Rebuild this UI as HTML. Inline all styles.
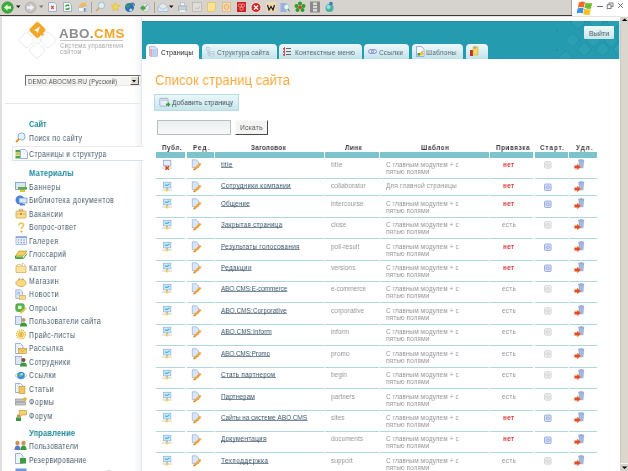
<!DOCTYPE html>
<html><head><meta charset="utf-8"><style>
html,body{margin:0;padding:0;}
body{width:628px;height:471px;overflow:hidden;position:relative;background:#fff;font-family:"Liberation Sans", sans-serif;}
</style></head><body>
<div style="position:absolute;left:0px;top:0px;width:572px;height:15px;background:#d6d3ce"></div><div style="position:absolute;left:0px;top:15px;width:573px;height:1px;background:#3c3a36"></div><div style="position:absolute;left:571px;top:0px;width:1px;height:15px;background:#a8a49c"></div><svg style="position:absolute;left:1px;top:1px" width="13" height="13" viewBox="0 0 13 13"><circle cx="6.5" cy="6.5" r="5.6" fill="#3cae3a" stroke="#2a8a28" stroke-width="0.8"/><path d="M3 6.5 L6.5 3.2 L6.5 5.2 L10 5.2 L10 7.8 L6.5 7.8 L6.5 9.8Z" fill="#e8ffe0"/></svg><svg style="position:absolute;left:16px;top:5px" width="5" height="4" viewBox="0 0 5 4"><path d="M0 0.5 L4.5 0.5 L2.25 3Z" fill="#111"/></svg><svg style="position:absolute;left:24px;top:1px" width="13" height="13" viewBox="0 0 13 13"><circle cx="6.5" cy="6.5" r="5.4" fill="#c4c4c2" stroke="#a8a8a6" stroke-width="0.8"/><path d="M10 6.5 L6.5 3.2 L6.5 5.2 L3 5.2 L3 7.8 L6.5 7.8 L6.5 9.8Z" fill="#f4f4f4"/></svg><svg style="position:absolute;left:39px;top:5px" width="5" height="4" viewBox="0 0 5 4"><path d="M0 0.5 L4.5 0.5 L2.25 3Z" fill="#777"/></svg><svg style="position:absolute;left:48px;top:2px" width="9" height="10" viewBox="0 0 9 10"><path d="M0.5 0.5 H6.3 L8.5 2.7 V9.5 H0.5Z" fill="#eef4fc" stroke="#98a8cc" stroke-width="0.9"/><path d="M3.2 3.8 L5.6 6.8 M5.6 3.8 L3.2 6.8" stroke="#e04838" stroke-width="1.3"/></svg><svg style="position:absolute;left:63px;top:2px" width="9" height="10" viewBox="0 0 9 10"><path d="M0.5 0.5 H6.3 L8.5 2.7 V9.5 H0.5Z" fill="#eef6f0" stroke="#98a8cc" stroke-width="0.9"/><path d="M2.6 4.6 Q3.2 2.8 5.2 3.2 L6.2 3.6 M6.2 5.6 Q5.8 7.6 3.6 7.2 L2.6 6.8" stroke="#20962e" stroke-width="1.3" fill="none"/></svg><svg style="position:absolute;left:77px;top:1px" width="11" height="12" viewBox="0 0 11 12"><path d="M0.8 6.5 L4.5 2 L8.5 1.5 L10 5 L6 6.8Z" fill="#f2b860"/><path d="M1.5 6.5 L6 6.5 L9.5 5 V10.5 H1.5Z" fill="#f0f4fa" stroke="#a8b8d8" stroke-width="0.6"/><rect x="6.8" y="7" width="1.8" height="3.5" fill="#6a8ac0"/></svg><div style="position:absolute;left:91px;top:2px;width:1px;height:11px;background:#a8a49c"></div><svg style="position:absolute;left:95px;top:1px" width="11" height="12" viewBox="0 0 11 12"><circle cx="6.5" cy="4.5" r="3.2" fill="#dcf0f8" stroke="#9ab8c8" stroke-width="0.9"/><path d="M4 7 L1.2 10" stroke="#e0a050" stroke-width="1.4"/></svg><svg style="position:absolute;left:110px;top:1px" width="11" height="11" viewBox="0 0 11 11"><path d="M5.5 1.5 L6.8 4.3 L9.7 4.5 L7.4 6.5 L8.2 9.6 L5.5 7.9 L2.8 9.6 L3.6 6.5 L1.3 4.5 L4.2 4.3Z" fill="#f4dc50" stroke="#e0b030" stroke-width="0.6"/></svg><svg style="position:absolute;left:124px;top:1px" width="12" height="12" viewBox="0 0 12 12"><circle cx="5.5" cy="6.5" r="4.5" fill="#2a70b8"/><path d="M2 5 Q4 2.5 6.5 3.5 Q6 6.5 3 7.5Z" fill="#3a9a5a"/><circle cx="6.8" cy="9" r="1.6" fill="#c8d0f0"/><path d="M7.5 2 Q10.5 1.5 10.5 4.5" stroke="#304878" stroke-width="1" fill="none"/></svg><svg style="position:absolute;left:139px;top:1px" width="11" height="12" viewBox="0 0 11 12"><circle cx="6.3" cy="6.5" r="4.2" fill="#e0e8ec" stroke="#a8b4bc" stroke-width="0.6"/><path d="M8.5 3.5 L6.5 6" stroke="#667" stroke-width="0.7" fill="none"/><path d="M1 7 L4.5 3.8 L4.5 5.5 L6.5 5.5 L6.5 8.5 L4.5 8.5 L4.5 10Z" fill="#40a840"/></svg><div style="position:absolute;left:154px;top:2px;width:1px;height:11px;background:#a8a49c"></div><svg style="position:absolute;left:157px;top:1px" width="12" height="12" viewBox="0 0 12 12"><path d="M1 5.5 L6 2 L11 5.5 V10.5 H1Z" fill="#d8e8f8" stroke="#98b0cc" stroke-width="0.6"/><path d="M3 5 Q6 2.5 9 5 L6 7Z" fill="#f8e8d8"/><path d="M1 5.5 L6 8.5 L11 5.5" stroke="#98b0cc" stroke-width="0.6" fill="none"/></svg><svg style="position:absolute;left:169px;top:5px" width="5" height="4" viewBox="0 0 5 4"><path d="M0 0.5 L4.5 0.5 L2.25 3Z" fill="#111"/></svg><svg style="position:absolute;left:178px;top:1px" width="9" height="12" viewBox="0 0 9 12"><rect x="2.5" y="1.5" width="4" height="3.5" fill="#e8f0f8" stroke="#a8b8c8" stroke-width="0.6"/><rect x="0.5" y="5" width="8" height="4" fill="#c8d0d8" stroke="#98a0a8" stroke-width="0.6"/><rect x="2" y="9" width="5" height="2" fill="#f0f0f4"/></svg><svg style="position:absolute;left:192px;top:2px" width="10" height="10" viewBox="0 0 10 10"><rect x="0.5" y="0.5" width="9" height="9" fill="#e0ded8" stroke="#b4b2ac" stroke-width="0.7"/><path d="M2.5 7.5 L4.5 6 L6 7 L8 4" stroke="#b8b8b8" stroke-width="0.8" fill="none"/></svg><svg style="position:absolute;left:207px;top:2px" width="9" height="10" viewBox="0 0 9 10"><path d="M0.5 0.5 H8.5 V7 L6.5 9.5 H0.5Z" fill="#f8e490" stroke="#dcc060" stroke-width="0.7"/></svg><svg style="position:absolute;left:222px;top:2px" width="9" height="10" viewBox="0 0 9 10"><rect x="0.5" y="0.5" width="8" height="9" fill="#f8dcb0" stroke="#e4b070" stroke-width="0.7"/><circle cx="4.5" cy="5" r="2.4" fill="none" stroke="#dca060" stroke-width="0.8"/><circle cx="4.5" cy="5" r="1" fill="#f0c890"/></svg><svg style="position:absolute;left:237px;top:2px" width="9" height="10" viewBox="0 0 9 10"><rect x="0" y="0" width="9" height="10" fill="#cc2222"/><circle cx="3" cy="3.5" r="1.6" fill="none" stroke="#ffb0b0" stroke-width="0.7"/><circle cx="6" cy="3.5" r="1.6" fill="none" stroke="#ffb0b0" stroke-width="0.7"/><circle cx="4.5" cy="6.8" r="1.6" fill="none" stroke="#ffb0b0" stroke-width="0.7"/></svg><svg style="position:absolute;left:250px;top:1px" width="12" height="12" viewBox="0 0 12 12"><circle cx="6" cy="6.5" r="5" fill="#d42a2a" stroke="#fff" stroke-width="0.8"/><path d="M4 4.5 L8 8.5 M8 4.5 L4 8.5" stroke="#fff" stroke-width="1.3"/></svg><svg style="position:absolute;left:266px;top:2px" width="10" height="10" viewBox="0 0 10 10"><rect x="0" y="0" width="10" height="10" fill="#f0d8b0"/><path d="M1.5 3 L3 8 L5 4.5 L7 8 L8.5 3" stroke="#222" stroke-width="1.2" fill="none"/></svg><svg style="position:absolute;left:280px;top:1px" width="10" height="12" viewBox="0 0 10 12"><rect x="0.5" y="2" width="6" height="9" fill="#9ab0e0"/><circle cx="6.5" cy="6" r="2.6" fill="#e8f8f8" stroke="#7aa" stroke-width="0.5"/><path d="M8 8 L9.5 10.5" stroke="#666" stroke-width="1"/></svg><svg style="position:absolute;left:294px;top:1px" width="12" height="12" viewBox="0 0 12 12"><g fill="#2aa02a"><circle cx="6" cy="2.5" r="2"/><circle cx="9.5" cy="5" r="2"/><circle cx="8.5" cy="9" r="2"/><circle cx="3.5" cy="9" r="2"/><circle cx="2.5" cy="5" r="2"/></g><circle cx="6" cy="6.2" r="1.8" fill="#d83a2a"/></svg><svg style="position:absolute;left:310px;top:1px" width="10" height="12" viewBox="0 0 10 12"><rect x="0" y="0.5" width="10" height="11" fill="#8a8a88"/><rect x="3" y="1.5" width="4" height="9" fill="#d8d8d6"/><rect x="3" y="4" width="4" height="0.8" fill="#8a8a88"/><rect x="3" y="7" width="4" height="0.8" fill="#8a8a88"/></svg><svg style="position:absolute;left:324px;top:1px" width="11" height="12" viewBox="0 0 11 12"><circle cx="5.5" cy="7" r="4" fill="#4ab0a0"/><circle cx="4.5" cy="6" r="2" fill="#9ae0e0"/><circle cx="7" cy="2.5" r="1.8" fill="#3a7ac8"/></svg><div style="position:absolute;left:572px;top:0px;width:56px;height:16px;background:#fff"></div><svg style="position:absolute;left:576px;top:0px" width="17" height="16" viewBox="0 0 17 16"><path d="M3 2.5 Q5.5 0.8 9 2 L7.8 7.4 Q4.6 6.2 1.8 7.8Z" fill="#f0682a"/><path d="M9.6 2.4 Q12.6 3.9 16.2 3 L15 8.6 Q11.6 9.6 8.4 7.8Z" fill="#70bc38"/><path d="M1.6 8.6 Q4.4 7 7.6 8.2 L6.6 13.4 Q3.6 12.2 0.6 13.6Z" fill="#3890e8"/><path d="M8.3 8.6 Q11.4 10.2 14.8 9.3 L13.8 14.6 Q10.4 15.8 7.2 14Z" fill="#f8c020"/></svg><div style="position:absolute;left:597px;top:6px;width:5.5px;height:1.2px;background:#707070"></div><svg style="position:absolute;left:606px;top:2px" width="8" height="8" viewBox="0 0 8 8"><rect x="3" y="1" width="4" height="3.6" fill="none" stroke="#707070" stroke-width="0.9"/><rect x="1.2" y="2.8" width="3.8" height="3.8" fill="#fff" stroke="#707070" stroke-width="0.9"/></svg><svg style="position:absolute;left:617px;top:2px" width="7" height="7" viewBox="0 0 7 7"><path d="M1.2 1.2 L5.8 5.8 M5.8 1.2 L1.2 5.8" stroke="#707070" stroke-width="1"/></svg><div style="position:absolute;left:0px;top:16px;width:2px;height:455px;background:#e0e0e0"></div><div style="position:absolute;left:2px;top:16px;width:618px;height:1px;background:#e4e4e4"></div><div style="position:absolute;left:620px;top:16px;width:8px;height:455px;background:#dbd7cf"></div><div style="position:absolute;left:620px;top:16px;width:1px;height:455px;background:#cdc9c1"></div><div style="position:absolute;left:620px;top:16px;width:8px;height:8px;background:#d6d3ce;border-top:1px solid #f4f4f2;box-sizing:border-box"></div><svg style="position:absolute;left:621px;top:18px" width="7" height="5" viewBox="0 0 7 5"><path d="M0.8 3 L3.6 0.5 L6.4 3Z" fill="#000"/></svg><div style="position:absolute;left:620px;top:463px;width:8px;height:8px;background:#d6d3ce;border-top:1px solid #f4f4f2;box-sizing:border-box"></div><svg style="position:absolute;left:621px;top:465px" width="7" height="5" viewBox="0 0 7 5"><path d="M0.8 1.5 L3.6 4 L6.4 1.5Z" fill="#000"/></svg><div style="position:absolute;left:134px;top:17px;width:8px;height:454px;background:linear-gradient(to right,#fff,#f1f3f5)"></div><div style="position:absolute;left:141px;top:17px;width:1px;height:454px;background:#e6eaec"></div><div style="position:absolute;left:142px;top:21px;width:477px;height:38px;background:#249bae"></div><div style="position:absolute;left:619px;top:21px;width:1px;height:38px;background:#bfe9f0"></div><svg style="position:absolute;left:142px;top:21px" width="477" height="37"><rect x="0" y="0" width="477" height="1" fill="#2a8f9f"/><rect x="425.3" y="13.900000000000002" width="10.6" height="10.6" rx="2" transform="rotate(45 430.6 19.200000000000003)" fill="#2aa0b2" stroke="#1f92a4" stroke-width="0.9"/><rect x="437.09999999999997" y="22.999999999999996" width="10.6" height="10.6" rx="2" transform="rotate(45 442.4 28.299999999999997)" fill="#2aa0b2" stroke="#1f92a4" stroke-width="0.9"/><rect x="455.40000000000003" y="22.999999999999996" width="10.6" height="10.6" rx="2" transform="rotate(45 460.70000000000005 28.299999999999997)" fill="#2aa0b2" stroke="#1f92a4" stroke-width="0.9"/><rect x="446.2" y="13.900000000000002" width="10.6" height="10.6" rx="2" transform="rotate(45 451.5 19.200000000000003)" fill="#2aa0b2" stroke="#1f92a4" stroke-width="0.9"/><rect x="463.7" y="13.900000000000002" width="10.6" height="10.6" rx="2" transform="rotate(45 469 19.200000000000003)" fill="#2aa0b2" stroke="#1f92a4" stroke-width="0.9"/><rect x="430.7" y="-4.3" width="10.6" height="10.6" rx="2" transform="rotate(45 436 1)" fill="#2aa0b2" stroke="#1f92a4" stroke-width="0.9"/><rect x="448.7" y="-4.3" width="10.6" height="10.6" rx="2" transform="rotate(45 454 1)" fill="#2aa0b2" stroke="#1f92a4" stroke-width="0.9"/><rect x="466.7" y="-4.3" width="10.6" height="10.6" rx="2" transform="rotate(45 472 1)" fill="#2aa0b2" stroke="#1f92a4" stroke-width="0.9"/><rect x="472.7" y="22.999999999999996" width="10.6" height="10.6" rx="2" transform="rotate(45 478 28.299999999999997)" fill="#2aa0b2" stroke="#1f92a4" stroke-width="0.9"/><rect x="418.7" y="31.7" width="10.6" height="10.6" rx="2" transform="rotate(45 424 37)" fill="#2aa0b2" stroke="#1f92a4" stroke-width="0.9"/><circle cx="415" cy="9.4" r="0.9" fill="#1e8e9f"/><circle cx="415" cy="29" r="0.9" fill="#1e8e9f"/></svg><div style="position:absolute;left:584px;top:26px;width:30px;height:13px;background:linear-gradient(#eefafc,#c8e6ec);border-radius:1px"></div><div style="position:absolute;left:588.8px;top:29.91px;font-size:7.2px;line-height:7.2px;color:#4e585e;font-weight:normal;white-space:nowrap;will-change:transform;transform:scaleX(0.95);transform-origin:0 0;">Выйти</div><div style="position:absolute;left:146px;top:44px;width:53px;height:15px;background:#ffffff;border-radius:4px 4px 0 0"></div><div style="position:absolute;left:161px;top:49.40px;font-size:7.8px;line-height:7.8px;color:#222;font-weight:normal;white-space:nowrap;will-change:transform;transform:scaleX(0.84);transform-origin:0 0;letter-spacing:0.218px;">Страницы</div><div style="position:absolute;left:201.5px;top:44px;width:75.5px;height:15px;background:linear-gradient(#eef9fb,#c2e3ea);border-radius:4px 4px 0 0"></div><div style="position:absolute;left:217px;top:49.40px;font-size:7.8px;line-height:7.8px;color:#5a666c;font-weight:normal;white-space:nowrap;will-change:transform;transform:scaleX(0.84);transform-origin:0 0;letter-spacing:0.177px;">Структура сайта</div><div style="position:absolute;left:279px;top:44px;width:83px;height:15px;background:linear-gradient(#eef9fb,#c2e3ea);border-radius:4px 4px 0 0"></div><div style="position:absolute;left:295px;top:49.40px;font-size:7.8px;line-height:7.8px;color:#5a666c;font-weight:normal;white-space:nowrap;will-change:transform;transform:scaleX(0.84);transform-origin:0 0;letter-spacing:0.190px;">Контекстные меню</div><div style="position:absolute;left:364px;top:44px;width:45px;height:15px;background:linear-gradient(#eef9fb,#c2e3ea);border-radius:4px 4px 0 0"></div><div style="position:absolute;left:379px;top:49.40px;font-size:7.8px;line-height:7.8px;color:#5a666c;font-weight:normal;white-space:nowrap;will-change:transform;transform:scaleX(0.84);transform-origin:0 0;letter-spacing:0.229px;">Ссылки</div><div style="position:absolute;left:412px;top:44px;width:51px;height:15px;background:linear-gradient(#eef9fb,#c2e3ea);border-radius:4px 4px 0 0"></div><div style="position:absolute;left:426px;top:49.40px;font-size:7.8px;line-height:7.8px;color:#5a666c;font-weight:normal;white-space:nowrap;will-change:transform;transform:scaleX(0.84);transform-origin:0 0;letter-spacing:0.240px;">Шаблоны</div><div style="position:absolute;left:466px;top:44px;width:22px;height:15px;background:linear-gradient(#eef9fb,#c2e3ea);border-radius:4px 4px 0 0"></div><svg style="position:absolute;left:149px;top:46px" width="9" height="11" viewBox="0 0 9 11"><path d="M0.6 0.6 H6 L8.4 3 V10.2 H0.6Z" fill="#dce8fa" stroke="#98a8d8" stroke-width="0.8"/><rect x="1.4" y="3" width="2" height="6.8" fill="#f0a0a0"/><rect x="3.6" y="3" width="3.8" height="6.8" fill="#b8d0f4"/></svg><svg style="position:absolute;left:206px;top:47px" width="9" height="10" viewBox="0 0 9 10"><rect x="0.5" y="0.5" width="3" height="2.5" fill="#e4ecf4" stroke="#a8b8cc" stroke-width="0.5"/><path d="M2 3 V8 H4 M2 5.5 H4" stroke="#a8b8cc" stroke-width="0.7" fill="none"/><rect x="4" y="4.5" width="4" height="2" fill="#e4ecf4" stroke="#a8b8cc" stroke-width="0.5"/><rect x="4" y="7" width="4" height="2" fill="#e4ecf4" stroke="#a8b8cc" stroke-width="0.5"/></svg><svg style="position:absolute;left:283px;top:47px" width="8" height="10" viewBox="0 0 8 10"><g fill="#d84040"><rect x="0" y="1" width="2" height="1.5"/><rect x="0" y="4" width="2" height="1.5"/><rect x="0" y="7" width="2" height="1.5"/></g><g fill="#666"><rect x="3" y="1" width="5" height="1"/><rect x="3" y="4" width="5" height="1"/><rect x="3" y="7" width="5" height="1"/></g><rect x="1" y="0" width="0.8" height="9" fill="#d84040"/></svg><svg style="position:absolute;left:368px;top:48px" width="9" height="7" viewBox="0 0 9 7"><ellipse cx="3" cy="3.5" rx="2.5" ry="2" fill="none" stroke="#8a8ad0" stroke-width="1"/><ellipse cx="6" cy="3.5" rx="2.5" ry="2" fill="none" stroke="#8a8ad0" stroke-width="1"/></svg><svg style="position:absolute;left:416px;top:46px" width="9" height="11" viewBox="0 0 9 11"><path d="M0.5 0.5 H5.5 L8 3 V10.5 H0.5Z" fill="#f4f8ff" stroke="#8aa0d8" stroke-width="0.8"/><path d="M1.5 9.5 L7 4 L7 9.5Z" fill="#f0c030"/><rect x="1.5" y="7" width="2.5" height="2.5" fill="#40a040"/></svg><svg style="position:absolute;left:469px;top:46px" width="11" height="11" viewBox="0 0 11 11"><rect x="1" y="4" width="3" height="6" fill="#c03030"/><rect x="4" y="1" width="5" height="8" fill="#f8d860" stroke="#c8a030" stroke-width="0.5"/><path d="M6 0 V3" stroke="#888" stroke-width="1"/></svg><svg style="position:absolute;left:0;top:0" width="140" height="62"><rect x="20.5" y="34" width="12" height="12" rx="2" transform="rotate(45 26.5 40)" fill="#fff" stroke="#dedede" stroke-width="0.7"/><rect x="42" y="34" width="12" height="12" rx="2" transform="rotate(45 48 40)" fill="#fff" stroke="#dedede" stroke-width="0.7"/><rect x="31" y="44.3" width="12" height="12" rx="2" transform="rotate(45 37 50.3)" fill="#fff" stroke="#dedede" stroke-width="0.7"/><rect x="31.4" y="24" width="12" height="12" rx="2" transform="rotate(45 37.4 30)" fill="#f5a52a" stroke="#f5a52a" stroke-width="0.7"/><path d="M34 30.3 L40 26.6 L37.6 33.4 L36.6 31.2Z" fill="#fff8e8"/><circle cx="42.5" cy="34.6" r="1.2" fill="#f5a52a"/></svg><div style="position:absolute;left:59.3px;top:26.86px;font-size:13.4px;line-height:13.4px;color:#888;font-weight:bold;white-space:nowrap;will-change:transform;letter-spacing:0.35px;"><span style="color:#8e8e8e">ABO.</span><span style="color:#f5a52a">CMS</span></div><div style="position:absolute;left:59.5px;top:40px;width:63px;height:1px;background:#c8c8c8"></div><div style="position:absolute;left:59.5px;top:41.71px;font-size:7.2px;line-height:7.2px;color:#a8a8a8;font-weight:normal;white-space:nowrap;will-change:transform;transform:scaleX(0.84);transform-origin:0 0;letter-spacing:0.295px;">Система управления</div><div style="position:absolute;left:59.5px;top:48.31px;font-size:7.2px;line-height:7.2px;color:#a8a8a8;font-weight:normal;white-space:nowrap;will-change:transform;transform:scaleX(0.84);transform-origin:0 0;letter-spacing:0.340px;">сайтом</div><div style="position:absolute;left:25px;top:75px;width:115.5px;height:11px;background:#f6f6f4;border-top:1px solid #6a6a6a;border-left:1px solid #6a6a6a;border-bottom:1px solid #e8e8e8;border-right:1px solid #e8e8e8;box-sizing:border-box"></div><div style="position:absolute;left:27.6px;top:78.27px;font-size:7px;line-height:7px;color:#4e4e4e;font-weight:normal;white-space:nowrap;will-change:transform;transform:scaleX(0.84);transform-origin:0 0;letter-spacing:0.355px;">DEMO.ABOCMS.RU (Русский)</div><div style="position:absolute;left:129.6px;top:76px;width:9.5px;height:9px;background:#e0ddd6;border-right:1px solid #5a5a5a;border-bottom:1px solid #5a5a5a;border-top:1px solid #fafafa;border-left:1px solid #fafafa;box-sizing:border-box"></div><svg style="position:absolute;left:132.3px;top:79.5px" width="4" height="3" viewBox="0 0 4 3"><path d="M0 0 H4 L2 2.5Z" fill="#111"/></svg><div style="position:absolute;left:5px;top:103px;width:136px;height:1px;background:#e6e9eb"></div><div style="position:absolute;left:29px;top:121.16px;font-size:8.2px;line-height:8.2px;color:#1f8a9e;font-weight:bold;white-space:nowrap;will-change:transform;transform:scaleX(0.9);transform-origin:0 0;letter-spacing:0.000px;">Сайт</div><div style="position:absolute;left:29px;top:135.06px;font-size:8.2px;line-height:8.2px;color:#475d6c;font-weight:normal;white-space:nowrap;will-change:transform;transform:scaleX(0.84);transform-origin:0 0;letter-spacing:0.447px;">Поиск по сайту</div><svg style="position:absolute;left:14px;top:132px" width="13" height="11" viewBox="0 0 13 11"><circle cx="7.5" cy="4.5" r="3.6" fill="#e6f2fc" stroke="#7aa6d0" stroke-width="0.9"/><path d="M5 7 L2 10" stroke="#e8902a" stroke-width="1.8"/></svg><div style="position:absolute;left:11.5px;top:146px;width:131px;height:14.6px;background:#fff;border-top:1px solid #e6e8ea;border-bottom:1px solid #d0e4ea;border-left:1px solid #e6e8ea;box-sizing:border-box"></div><div style="position:absolute;left:29px;top:150.86px;font-size:8.2px;line-height:8.2px;color:#475d6c;font-weight:normal;white-space:nowrap;will-change:transform;transform:scaleX(0.84);transform-origin:0 0;letter-spacing:0.398px;">Страницы и структура</div><svg style="position:absolute;left:15px;top:149px" width="13" height="10" viewBox="0 0 13 10"><rect x="0.5" y="1" width="5" height="2.5" fill="#4aa84a"/><rect x="0.5" y="4" width="5" height="2.5" fill="#d8c040"/><rect x="0.5" y="7" width="5" height="2.5" fill="#4aa84a"/><path d="M5.5 0.5 H10 L12.5 3 V9.5 H5.5Z" fill="#f4f8ff" stroke="#8aa0d8" stroke-width="0.8"/></svg><div style="position:absolute;left:29px;top:169.86px;font-size:8.2px;line-height:8.2px;color:#1f8a9e;font-weight:bold;white-space:nowrap;will-change:transform;transform:scaleX(0.92);transform-origin:0 0;letter-spacing:0.212px;">Материалы</div><div style="position:absolute;left:29px;top:183.86px;font-size:8.2px;line-height:8.2px;color:#475d6c;font-weight:normal;white-space:nowrap;will-change:transform;transform:scaleX(0.84);transform-origin:0 0;letter-spacing:0.607px;">Баннеры</div><svg style="position:absolute;left:15px;top:182px" width="13" height="12" viewBox="0 0 13 12"><rect x="0.5" y="0.5" width="10" height="7" fill="#d8e6f8" stroke="#7a96c8" stroke-width="0.8"/><rect x="3" y="5" width="9" height="2.5" fill="#5ab040"/><rect x="5" y="8" width="5" height="2" fill="#e8c030"/></svg><div style="position:absolute;left:29px;top:197.31px;font-size:8.2px;line-height:8.2px;color:#475d6c;font-weight:normal;white-space:nowrap;will-change:transform;transform:scaleX(0.84);transform-origin:0 0;letter-spacing:0.489px;">Библиотека документов</div><svg style="position:absolute;left:15px;top:195px" width="13" height="12" viewBox="0 0 13 12"><circle cx="5" cy="5" r="4.5" fill="#4a86d8"/><rect x="4" y="3" width="8" height="5" fill="#d8e8f8" stroke="#6a8ac8" stroke-width="0.7"/><rect x="5" y="9" width="5" height="1.5" fill="#4a86d8"/></svg><div style="position:absolute;left:29px;top:210.76px;font-size:8.2px;line-height:8.2px;color:#475d6c;font-weight:normal;white-space:nowrap;will-change:transform;transform:scaleX(0.84);transform-origin:0 0;letter-spacing:0.553px;">Вакансии</div><svg style="position:absolute;left:15px;top:208px" width="13" height="12" viewBox="0 0 13 12"><rect x="1" y="3" width="10" height="7" rx="1" fill="#f8dc90" stroke="#d0a850" stroke-width="0.8"/><rect x="4.2" y="1.2" width="3.6" height="1.8" fill="none" stroke="#c09850" stroke-width="0.7"/><rect x="1" y="5.5" width="10" height="0.8" fill="#e0b860"/><rect x="5.2" y="5.2" width="1.6" height="1.6" fill="#a87030"/></svg><div style="position:absolute;left:29px;top:224.21px;font-size:8.2px;line-height:8.2px;color:#475d6c;font-weight:normal;white-space:nowrap;will-change:transform;transform:scaleX(0.84);transform-origin:0 0;letter-spacing:0.495px;">Вопрос-ответ</div><svg style="position:absolute;left:15px;top:222px" width="13" height="12" viewBox="0 0 13 12"><path d="M4 3.5 Q4 1.2 6.2 1.2 Q8.5 1.2 8.5 3.3 Q8.5 4.8 6.5 5.8 V7.3" stroke="#ecc860" stroke-width="1.7" fill="none"/><circle cx="6.5" cy="9.6" r="1.1" fill="#e0b040"/></svg><div style="position:absolute;left:29px;top:237.66px;font-size:8.2px;line-height:8.2px;color:#475d6c;font-weight:normal;white-space:nowrap;will-change:transform;transform:scaleX(0.84);transform-origin:0 0;letter-spacing:0.562px;">Галерея</div><svg style="position:absolute;left:15px;top:235px" width="13" height="12" viewBox="0 0 13 12"><rect x="1" y="1.5" width="10.5" height="8" fill="#f0f4fc" stroke="#98aedc" stroke-width="0.8"/><rect x="1" y="1.5" width="10.5" height="1.6" fill="#88a8e0"/><g fill="#e07080"><circle cx="3.5" cy="5" r="0.8"/></g><g fill="#7090d8"><circle cx="6.2" cy="5" r="0.8"/><circle cx="9" cy="5" r="0.8"/><circle cx="6.2" cy="7.6" r="0.8"/></g><circle cx="3.5" cy="7.6" r="0.8" fill="#60c8d8"/><circle cx="9" cy="7.6" r="0.8" fill="#c070c8"/></svg><div style="position:absolute;left:29px;top:251.11px;font-size:8.2px;line-height:8.2px;color:#475d6c;font-weight:normal;white-space:nowrap;will-change:transform;transform:scaleX(0.84);transform-origin:0 0;letter-spacing:0.534px;">Глоссарий</div><svg style="position:absolute;left:15px;top:249px" width="13" height="12" viewBox="0 0 13 12"><path d="M0.5 7 L4 2 H12 L8.5 7Z" fill="#f0d060" stroke="#b89830" stroke-width="0.7"/><path d="M0.5 7 V9.5 H8.5 L12 4.5" fill="none" stroke="#40a040" stroke-width="1"/><rect x="1" y="7.5" width="7" height="2" fill="#60b040"/></svg><div style="position:absolute;left:29px;top:264.56px;font-size:8.2px;line-height:8.2px;color:#475d6c;font-weight:normal;white-space:nowrap;will-change:transform;transform:scaleX(0.84);transform-origin:0 0;letter-spacing:0.532px;">Каталог</div><svg style="position:absolute;left:15px;top:262px" width="13" height="12" viewBox="0 0 13 12"><path d="M1 4 H11 V10.5 H1Z" fill="#fbe4a0" stroke="#d8b060" stroke-width="0.8"/><path d="M1 4 L3 2.5 H6 L7 4" fill="#f8e8c0" stroke="#d8b060" stroke-width="0.6"/><path d="M7.5 4 V1 L9.5 2 L10 4" fill="#fff" stroke="#9ab" stroke-width="0.5"/></svg><div style="position:absolute;left:29px;top:278.01px;font-size:8.2px;line-height:8.2px;color:#475d6c;font-weight:normal;white-space:nowrap;will-change:transform;transform:scaleX(0.84);transform-origin:0 0;letter-spacing:0.565px;">Магазин</div><svg style="position:absolute;left:15px;top:276px" width="13" height="12" viewBox="0 0 13 12"><ellipse cx="6" cy="7" rx="5.2" ry="3.6" fill="#f8d880" stroke="#d0a850" stroke-width="0.8"/><path d="M3.5 4 L4.5 1.5 M8.5 4 L7.5 1.5" stroke="#a89870" stroke-width="0.8" fill="none"/></svg><div style="position:absolute;left:29px;top:291.46px;font-size:8.2px;line-height:8.2px;color:#475d6c;font-weight:normal;white-space:nowrap;will-change:transform;transform:scaleX(0.84);transform-origin:0 0;letter-spacing:0.567px;">Новости</div><svg style="position:absolute;left:15px;top:289px" width="13" height="12" viewBox="0 0 13 12"><path d="M0.8 0.8 H5.5 L7.5 2.8 V9.5 H0.8Z" fill="#dce8fa" stroke="#98acd8" stroke-width="0.8"/><path d="M2 3.5 H5 M2 5 H5" stroke="#7a98d0" stroke-width="0.6"/><rect x="4.5" y="6.3" width="6" height="4" fill="#f4d890" stroke="#d0a850" stroke-width="0.6"/></svg><div style="position:absolute;left:29px;top:304.91px;font-size:8.2px;line-height:8.2px;color:#475d6c;font-weight:normal;white-space:nowrap;will-change:transform;transform:scaleX(0.84);transform-origin:0 0;letter-spacing:0.641px;">Опросы</div><svg style="position:absolute;left:15px;top:303px" width="13" height="12" viewBox="0 0 13 12"><rect x="0.8" y="0.8" width="8.4" height="7.6" rx="1.8" fill="#58b848" stroke="#3a9030" stroke-width="0.7"/><rect x="3" y="2.8" width="3.6" height="3.2" rx="0.8" fill="#e0f8d8"/><path d="M5.5 10 L11 5" stroke="#e8c040" stroke-width="1.8"/></svg><div style="position:absolute;left:29px;top:318.36px;font-size:8.2px;line-height:8.2px;color:#475d6c;font-weight:normal;white-space:nowrap;will-change:transform;transform:scaleX(0.84);transform-origin:0 0;letter-spacing:0.487px;">Пользователи сайта</div><svg style="position:absolute;left:15px;top:316px" width="13" height="12" viewBox="0 0 13 12"><rect x="0.5" y="0.5" width="6" height="8" fill="#dce6f8" stroke="#7a96c8" stroke-width="0.7"/><circle cx="8.5" cy="4" r="2" fill="#c8945a"/><path d="M5 10.5 Q5 6.5 8.5 6.5 Q12 6.5 12 10.5Z" fill="#3a9a3a"/></svg><div style="position:absolute;left:29px;top:331.81px;font-size:8.2px;line-height:8.2px;color:#475d6c;font-weight:normal;white-space:nowrap;will-change:transform;transform:scaleX(0.84);transform-origin:0 0;letter-spacing:0.531px;">Прайс-листы</div><svg style="position:absolute;left:15px;top:329px" width="13" height="12" viewBox="0 0 13 12"><circle cx="6" cy="5.5" r="4.6" fill="#fbe8a0" stroke="#e0b858" stroke-width="1.1" stroke-dasharray="1.1 1"/><circle cx="6" cy="5.5" r="2.6" fill="#f4d060" stroke="#d8a840" stroke-width="0.5"/><path d="M6 3.8 V7.2" stroke="#b88830" stroke-width="0.6"/></svg><div style="position:absolute;left:29px;top:345.26px;font-size:8.2px;line-height:8.2px;color:#475d6c;font-weight:normal;white-space:nowrap;will-change:transform;transform:scaleX(0.84);transform-origin:0 0;letter-spacing:0.566px;">Рассылка</div><svg style="position:absolute;left:15px;top:343px" width="13" height="12" viewBox="0 0 13 12"><path d="M0.5 0.5 H5.5 L8 3 V10.5 H0.5Z" fill="#eef4ff" stroke="#8aa0d8" stroke-width="0.8"/><rect x="3.5" y="5.5" width="8" height="5" fill="#f4d070" stroke="#c89030" stroke-width="0.6"/><path d="M3.5 5.5 L7.5 8.5 L11.5 5.5" stroke="#c89030" stroke-width="0.6" fill="none"/></svg><div style="position:absolute;left:29px;top:358.71px;font-size:8.2px;line-height:8.2px;color:#475d6c;font-weight:normal;white-space:nowrap;will-change:transform;transform:scaleX(0.84);transform-origin:0 0;letter-spacing:0.529px;">Сотрудники</div><svg style="position:absolute;left:15px;top:356px" width="13" height="12" viewBox="0 0 13 12"><rect x="0.5" y="0.5" width="6" height="8" fill="#dce6f8" stroke="#7a96c8" stroke-width="0.7"/><circle cx="8.5" cy="4" r="2" fill="#7a5030"/><path d="M5 10.5 Q5 6.5 8.5 6.5 Q12 6.5 12 10.5Z" fill="#3a9a3a"/></svg><div style="position:absolute;left:29px;top:372.16px;font-size:8.2px;line-height:8.2px;color:#475d6c;font-weight:normal;white-space:nowrap;will-change:transform;transform:scaleX(0.84);transform-origin:0 0;letter-spacing:0.619px;">Ссылки</div><svg style="position:absolute;left:15px;top:370px" width="13" height="12" viewBox="0 0 13 12"><ellipse cx="6" cy="5.5" rx="5.8" ry="2.2" fill="none" stroke="#a8b8d0" stroke-width="0.8"/><circle cx="6" cy="5.5" r="3.8" fill="#3a90d8"/><path d="M3.5 4.5 Q5.5 2.5 7.5 4 Q7 7 4.5 7.5Z" fill="#60c070"/><circle cx="6.8" cy="4.2" r="1.2" fill="#b8ecf8" opacity="0.8"/></svg><div style="position:absolute;left:29px;top:385.61px;font-size:8.2px;line-height:8.2px;color:#475d6c;font-weight:normal;white-space:nowrap;will-change:transform;transform:scaleX(0.84);transform-origin:0 0;letter-spacing:0.569px;">Статьи</div><svg style="position:absolute;left:15px;top:383px" width="13" height="12" viewBox="0 0 13 12"><path d="M0.5 0.5 H5.5 L8 3 V9.5 H0.5Z" fill="#eef4ff" stroke="#8aa0d8" stroke-width="0.8"/><rect x="4" y="3.5" width="6" height="7" fill="#f0c860" stroke="#c89030" stroke-width="0.6"/></svg><div style="position:absolute;left:29px;top:399.06px;font-size:8.2px;line-height:8.2px;color:#475d6c;font-weight:normal;white-space:nowrap;will-change:transform;transform:scaleX(0.84);transform-origin:0 0;letter-spacing:0.720px;">Формы</div><svg style="position:absolute;left:15px;top:397px" width="13" height="12" viewBox="0 0 13 12"><rect x="0.5" y="2" width="10" height="2.5" fill="#c8c8c8" stroke="#888" stroke-width="0.6"/><rect x="0.5" y="5.5" width="10" height="2.5" fill="#c8c8c8" stroke="#888" stroke-width="0.6"/><circle cx="10" cy="2" r="1.8" fill="#e8b830"/></svg><div style="position:absolute;left:29px;top:412.51px;font-size:8.2px;line-height:8.2px;color:#475d6c;font-weight:normal;white-space:nowrap;will-change:transform;transform:scaleX(0.84);transform-origin:0 0;letter-spacing:0.667px;">Форум</div><svg style="position:absolute;left:15px;top:410px" width="13" height="12" viewBox="0 0 13 12"><path d="M4 0.5 H11.5 V5 H7 L5 7Z" fill="#f4d070" stroke="#c89030" stroke-width="0.6"/><circle cx="3.5" cy="6" r="1.8" fill="#c8945a"/><rect x="1" y="7.5" width="5" height="3.5" fill="#3a9a3a"/></svg><div style="position:absolute;left:29px;top:429.86px;font-size:8.2px;line-height:8.2px;color:#1f8a9e;font-weight:bold;white-space:nowrap;will-change:transform;transform:scaleX(0.92);transform-origin:0 0;letter-spacing:0.176px;">Управление</div><div style="position:absolute;left:29px;top:443.36px;font-size:8.2px;line-height:8.2px;color:#475d6c;font-weight:normal;white-space:nowrap;will-change:transform;transform:scaleX(0.84);transform-origin:0 0;letter-spacing:0.434px;">Пользователи</div><svg style="position:absolute;left:14px;top:440px" width="14" height="11" viewBox="0 0 14 11"><circle cx="3.5" cy="3" r="2.2" fill="#c8945a"/><path d="M0.5 10 Q0.5 5.5 3.5 5.5 Q6.5 5.5 6.5 10Z" fill="#5a7ad0"/><circle cx="9.5" cy="3" r="2.2" fill="#c8945a"/><path d="M6.5 10 Q6.5 5.5 9.5 5.5 Q12.5 5.5 12.5 10Z" fill="#3a9a3a"/></svg><div style="position:absolute;left:29px;top:456.86px;font-size:8.2px;line-height:8.2px;color:#475d6c;font-weight:normal;white-space:nowrap;will-change:transform;transform:scaleX(0.84);transform-origin:0 0;letter-spacing:0.432px;">Резервирование</div><svg style="position:absolute;left:15px;top:453px" width="13" height="11" viewBox="0 0 13 11"><path d="M0.5 0.5 H5.5 L8 3 V10.5 H0.5Z" fill="#eef4ff" stroke="#8aa0d8" stroke-width="0.8"/><rect x="5" y="5" width="6" height="5.5" fill="#3aa03a"/></svg><svg style="position:absolute;left:15px;top:468px" width="13" height="4" viewBox="0 0 13 4"><rect x="0.5" y="0.5" width="11" height="4" fill="#6a9ad8"/></svg><div style="position:absolute;left:29px;top:471.46px;font-size:8.2px;line-height:8.2px;color:#475d6c;font-weight:normal;white-space:nowrap;will-change:transform;transform:scaleX(0.84);transform-origin:0 0;letter-spacing:0.496px;">Статистика посещений</div><div style="position:absolute;left:154.8px;top:74.12px;font-size:13.8px;line-height:13.8px;color:#f4aa3e;font-weight:normal;white-space:nowrap;will-change:transform;transform:scaleX(0.95);transform-origin:0 0;letter-spacing:0.039px;">Список страниц сайта</div><div style="position:absolute;left:154.3px;top:94px;width:84.4px;height:16.6px;background:linear-gradient(#eaf8fa,#c6e6ec);border:1px solid #b8dce4;box-sizing:border-box"></div><svg style="position:absolute;left:159px;top:97px" width="13" height="11" viewBox="0 0 13 11"><rect x="0.8" y="1.3" width="8.2" height="7.8" rx="1" fill="#e8eef6" stroke="#98a4c0" stroke-width="0.8"/><rect x="1.8" y="2.3" width="6.2" height="1.6" fill="#c4d0e4"/><path d="M7 6.5 H9 V5 L11.5 7.5 L9 10 V8.5 H7Z" fill="#3aa03a"/></svg><div style="position:absolute;left:172px;top:99.37px;font-size:7.6px;line-height:7.6px;color:#444a50;font-weight:normal;white-space:nowrap;will-change:transform;transform:scaleX(0.86);transform-origin:0 0;letter-spacing:0.198px;">Добавить страницу</div><div style="position:absolute;left:157.2px;top:120.2px;width:73.5px;height:14.4px;background:linear-gradient(#eceeee,#f8f8f8);border:1px solid #b4c0c8;box-sizing:border-box"></div><div style="position:absolute;left:234.8px;top:120px;width:33px;height:14.6px;background:#f4f4f2;border-top:1px solid #fafafa;border-left:1px solid #fafafa;border-right:1px solid #4a4a4a;border-bottom:1px solid #4a4a4a;box-sizing:border-box"></div><div style="position:absolute;left:240px;top:123.97px;font-size:7.6px;line-height:7.6px;color:#585858;font-weight:normal;white-space:nowrap;will-change:transform;transform:scaleX(0.88);transform-origin:0 0;letter-spacing:0.276px;">Искать</div><div style="position:absolute;left:156px;top:151.5px;width:29px;height:6px;background:#7cc3cc"></div><div style="position:absolute;left:161.7px;top:144.42px;font-size:7.3px;line-height:7.3px;color:#3c3c3c;font-weight:bold;white-space:nowrap;will-change:transform;transform:scaleX(0.86);transform-origin:0 0;letter-spacing:0.623px;">Публ.</div><div style="position:absolute;left:187px;top:151.5px;width:27px;height:6px;background:#7cc3cc"></div><div style="position:absolute;left:192.7px;top:144.42px;font-size:7.3px;line-height:7.3px;color:#3c3c3c;font-weight:bold;white-space:nowrap;will-change:transform;transform:scaleX(0.86);transform-origin:0 0;letter-spacing:1.181px;">Ред.</div><div style="position:absolute;left:215px;top:151.5px;width:109px;height:6px;background:#7cc3cc"></div><div style="position:absolute;left:250.9px;top:144.42px;font-size:7.3px;line-height:7.3px;color:#3c3c3c;font-weight:bold;white-space:nowrap;will-change:transform;transform:scaleX(0.86);transform-origin:0 0;letter-spacing:0.374px;">Заголовок</div><div style="position:absolute;left:325px;top:151.5px;width:54px;height:6px;background:#7cc3cc"></div><div style="position:absolute;left:344.5px;top:144.42px;font-size:7.3px;line-height:7.3px;color:#3c3c3c;font-weight:bold;white-space:nowrap;will-change:transform;transform:scaleX(0.86);transform-origin:0 0;letter-spacing:0.582px;">Линк</div><div style="position:absolute;left:380px;top:151.5px;width:109px;height:6px;background:#7cc3cc"></div><div style="position:absolute;left:421px;top:144.42px;font-size:7.3px;line-height:7.3px;color:#3c3c3c;font-weight:bold;white-space:nowrap;will-change:transform;transform:scaleX(0.86);transform-origin:0 0;letter-spacing:0.639px;">Шаблон</div><div style="position:absolute;left:490px;top:151.5px;width:43px;height:6px;background:#7cc3cc"></div><div style="position:absolute;left:495.9px;top:144.42px;font-size:7.3px;line-height:7.3px;color:#3c3c3c;font-weight:bold;white-space:nowrap;will-change:transform;transform:scaleX(0.86);transform-origin:0 0;letter-spacing:0.681px;">Привязка</div><div style="position:absolute;left:535px;top:151.5px;width:33px;height:6px;background:#7cc3cc"></div><div style="position:absolute;left:540.4px;top:144.42px;font-size:7.3px;line-height:7.3px;color:#3c3c3c;font-weight:bold;white-space:nowrap;will-change:transform;transform:scaleX(0.86);transform-origin:0 0;letter-spacing:1.089px;">Старт.</div><div style="position:absolute;left:569px;top:151.5px;width:28px;height:6px;background:#7cc3cc"></div><div style="position:absolute;left:575.6px;top:144.42px;font-size:7.3px;line-height:7.3px;color:#3c3c3c;font-weight:bold;white-space:nowrap;will-change:transform;transform:scaleX(0.86);transform-origin:0 0;letter-spacing:1.307px;">Удл.</div><div style="position:absolute;left:156px;top:178px;width:29px;height:1px;background:#b0d6de"></div><div style="position:absolute;left:187px;top:178px;width:27px;height:1px;background:#b0d6de"></div><div style="position:absolute;left:215px;top:178px;width:109px;height:1px;background:#b0d6de"></div><div style="position:absolute;left:325px;top:178px;width:54px;height:1px;background:#b0d6de"></div><div style="position:absolute;left:380px;top:178px;width:109px;height:1px;background:#b0d6de"></div><div style="position:absolute;left:490px;top:178px;width:43px;height:1px;background:#b0d6de"></div><div style="position:absolute;left:535px;top:178px;width:33px;height:1px;background:#b0d6de"></div><div style="position:absolute;left:569px;top:178px;width:28px;height:1px;background:#b0d6de"></div><svg style="position:absolute;left:161px;top:157px" width="12" height="14" viewBox="0 0 12 14"><rect x="2.4" y="3.3" width="7.4" height="5.5" fill="#e6eefa" stroke="#a0aad8" stroke-width="0.9"/><path d="M1 11 H11" stroke="#d0c8c0" stroke-width="1"/><path d="M4.3 9.3 L7.9 12.7 M7.9 9.3 L4.3 12.7" stroke="#d8401e" stroke-width="1.5"/></svg><svg style="position:absolute;left:190px;top:157px" width="13" height="15" viewBox="0 0 13 15"><path d="M2.3 2.8 H6.5 L8.5 4.8 V10.6 H2.3Z" fill="#d8e6fa" stroke="#a4b0e0" stroke-width="0.8"/><path d="M4.2 12.6 L10.6 6.6" stroke="#f0a63a" stroke-width="2.3"/><path d="M3.6 13.2 L4.6 12.2" stroke="#c07020" stroke-width="1.2"/></svg><div style="position:absolute;left:220.7px;top:160.95px;font-size:7.5px;line-height:7.5px;color:#38546a;font-weight:normal;white-space:nowrap;will-change:transform;transform:scaleX(0.84);transform-origin:0 0;letter-spacing:0.417px;text-decoration:underline;text-decoration-color:#7a8a96;text-decoration-thickness:1px;text-underline-offset:0px;text-decoration-skip-ink:none;">title</div><div style="position:absolute;left:330.8px;top:160.95px;font-size:7.5px;line-height:7.5px;color:#939393;font-weight:normal;white-space:nowrap;will-change:transform;transform:scaleX(0.84);transform-origin:0 0;letter-spacing:0.417px;">title</div><div style="position:absolute;left:386px;top:160.95px;font-size:7.5px;line-height:7.5px;color:#939393;font-weight:normal;white-space:nowrap;will-change:transform;transform:scaleX(0.84);transform-origin:0 0;letter-spacing:0.196px;">С главным модулем + с</div><div style="position:absolute;left:386px;top:167.95px;font-size:7.5px;line-height:7.5px;color:#939393;font-weight:normal;white-space:nowrap;will-change:transform;transform:scaleX(0.84);transform-origin:0 0;letter-spacing:0.212px;">пятью полями</div><div style="position:absolute;left:503px;top:160.95px;font-size:7.5px;line-height:7.5px;color:#d83030;font-weight:bold;white-space:nowrap;will-change:transform;transform:scaleX(0.84);transform-origin:0 0;letter-spacing:0.438px;">нет</div><svg style="position:absolute;left:543px;top:157px" width="10" height="14" viewBox="0 0 10 14"><rect x="1.5" y="4.7" width="6.6" height="6.5" rx="1" fill="#eeeeee" stroke="#d4d4d4" stroke-width="0.9"/><rect x="3.2" y="6.8" width="3.2" height="2.3" rx="1" fill="none" stroke="#c8c8c8" stroke-width="0.7"/></svg><svg style="position:absolute;left:573px;top:157px" width="13" height="14" viewBox="0 0 13 14"><rect x="5.2" y="2.7" width="6" height="1.2" fill="#90a4d4"/><rect x="7.2" y="2.1" width="2" height="0.8" fill="#90a4d4"/><path d="M5.5 4 H11 L10.4 11.3 H6.1Z" fill="#9cb0dc"/><path d="M7.6 4.5 V11 M9.2 4.5 V11" stroke="#b8c8ec" stroke-width="0.6"/><path d="M1.6 8.7 H4.3 V7.2 L7.6 10 L4.3 12.8 V11.3 H1.6Z" fill="#e44a24" stroke="#e8683a" stroke-width="0.5" stroke-linejoin="round"/></svg><div style="position:absolute;left:156px;top:195px;width:29px;height:1px;background:#b0d6de"></div><div style="position:absolute;left:187px;top:195px;width:27px;height:1px;background:#b0d6de"></div><div style="position:absolute;left:215px;top:195px;width:109px;height:1px;background:#b0d6de"></div><div style="position:absolute;left:325px;top:195px;width:54px;height:1px;background:#b0d6de"></div><div style="position:absolute;left:380px;top:195px;width:109px;height:1px;background:#b0d6de"></div><div style="position:absolute;left:490px;top:195px;width:43px;height:1px;background:#b0d6de"></div><div style="position:absolute;left:535px;top:195px;width:33px;height:1px;background:#b0d6de"></div><div style="position:absolute;left:569px;top:195px;width:28px;height:1px;background:#b0d6de"></div><svg style="position:absolute;left:161px;top:179px" width="12" height="14" viewBox="0 0 12 14"><rect x="2.4" y="3.3" width="7.4" height="5.5" fill="#bdf0fb" stroke="#a8b4dc" stroke-width="0.9"/><path d="M4 5.6 Q5.5 7.6 8.3 4.8" stroke="#48a8e4" stroke-width="1.2" fill="none"/><rect x="5.6" y="8.8" width="0.9" height="1.2" fill="#707070"/><path d="M1 11 H11" stroke="#d4d0c4" stroke-width="1"/><circle cx="6" cy="11" r="1.6" fill="#f0d060"/></svg><svg style="position:absolute;left:190px;top:179px" width="13" height="15" viewBox="0 0 13 15"><path d="M2.3 2.8 H6.5 L8.5 4.8 V10.6 H2.3Z" fill="#d8e6fa" stroke="#a4b0e0" stroke-width="0.8"/><path d="M4.2 12.6 L10.6 6.6" stroke="#f0a63a" stroke-width="2.3"/><path d="M3.6 13.2 L4.6 12.2" stroke="#c07020" stroke-width="1.2"/></svg><div style="position:absolute;left:220.7px;top:182.35px;font-size:7.5px;line-height:7.5px;color:#38546a;font-weight:normal;white-space:nowrap;will-change:transform;transform:scaleX(0.84);transform-origin:0 0;letter-spacing:0.368px;text-decoration:underline;text-decoration-color:#7a8a96;text-decoration-thickness:1px;text-underline-offset:0px;text-decoration-skip-ink:none;">Сотрудники компании</div><div style="position:absolute;left:330.8px;top:182.35px;font-size:7.5px;line-height:7.5px;color:#939393;font-weight:normal;white-space:nowrap;will-change:transform;transform:scaleX(0.84);transform-origin:0 0;letter-spacing:0.182px;">collaborator</div><div style="position:absolute;left:386px;top:182.35px;font-size:7.5px;line-height:7.5px;color:#939393;font-weight:normal;white-space:nowrap;will-change:transform;transform:scaleX(0.84);transform-origin:0 0;letter-spacing:0.272px;">Для главной страницы</div><div style="position:absolute;left:503px;top:182.35px;font-size:7.5px;line-height:7.5px;color:#d83030;font-weight:bold;white-space:nowrap;will-change:transform;transform:scaleX(0.84);transform-origin:0 0;letter-spacing:0.438px;">нет</div><svg style="position:absolute;left:543px;top:179px" width="10" height="14" viewBox="0 0 10 14"><rect x="1.5" y="5" width="6.6" height="6.5" rx="1" fill="#d4e0f8" stroke="#98a8de" stroke-width="0.9"/><rect x="3.2" y="7.1" width="3.2" height="2.3" rx="1" fill="none" stroke="#8898d0" stroke-width="0.7"/></svg><svg style="position:absolute;left:573px;top:179px" width="13" height="14" viewBox="0 0 13 14"><rect x="5.2" y="2.7" width="6" height="1.2" fill="#90a4d4"/><rect x="7.2" y="2.1" width="2" height="0.8" fill="#90a4d4"/><path d="M5.5 4 H11 L10.4 11.3 H6.1Z" fill="#9cb0dc"/><path d="M7.6 4.5 V11 M9.2 4.5 V11" stroke="#b8c8ec" stroke-width="0.6"/><path d="M1.6 8.7 H4.3 V7.2 L7.6 10 L4.3 12.8 V11.3 H1.6Z" fill="#e44a24" stroke="#e8683a" stroke-width="0.5" stroke-linejoin="round"/></svg><div style="position:absolute;left:156px;top:217px;width:29px;height:1px;background:#b0d6de"></div><div style="position:absolute;left:187px;top:217px;width:27px;height:1px;background:#b0d6de"></div><div style="position:absolute;left:215px;top:217px;width:109px;height:1px;background:#b0d6de"></div><div style="position:absolute;left:325px;top:217px;width:54px;height:1px;background:#b0d6de"></div><div style="position:absolute;left:380px;top:217px;width:109px;height:1px;background:#b0d6de"></div><div style="position:absolute;left:490px;top:217px;width:43px;height:1px;background:#b0d6de"></div><div style="position:absolute;left:535px;top:217px;width:33px;height:1px;background:#b0d6de"></div><div style="position:absolute;left:569px;top:217px;width:28px;height:1px;background:#b0d6de"></div><svg style="position:absolute;left:161px;top:196px" width="12" height="14" viewBox="0 0 12 14"><rect x="2.4" y="3.3" width="7.4" height="5.5" fill="#bdf0fb" stroke="#a8b4dc" stroke-width="0.9"/><path d="M4 5.6 Q5.5 7.6 8.3 4.8" stroke="#48a8e4" stroke-width="1.2" fill="none"/><rect x="5.6" y="8.8" width="0.9" height="1.2" fill="#707070"/><path d="M1 11 H11" stroke="#d4d0c4" stroke-width="1"/><circle cx="6" cy="11" r="1.6" fill="#f0d060"/></svg><svg style="position:absolute;left:190px;top:196px" width="13" height="15" viewBox="0 0 13 15"><path d="M2.3 2.8 H6.5 L8.5 4.8 V10.6 H2.3Z" fill="#d8e6fa" stroke="#a4b0e0" stroke-width="0.8"/><path d="M4.2 12.6 L10.6 6.6" stroke="#f0a63a" stroke-width="2.3"/><path d="M3.6 13.2 L4.6 12.2" stroke="#c07020" stroke-width="1.2"/></svg><div style="position:absolute;left:220.7px;top:199.65px;font-size:7.5px;line-height:7.5px;color:#38546a;font-weight:normal;white-space:nowrap;will-change:transform;transform:scaleX(0.84);transform-origin:0 0;letter-spacing:0.215px;text-decoration:underline;text-decoration-color:#7a8a96;text-decoration-thickness:1px;text-underline-offset:0px;text-decoration-skip-ink:none;">Общение</div><div style="position:absolute;left:330.8px;top:199.65px;font-size:7.5px;line-height:7.5px;color:#939393;font-weight:normal;white-space:nowrap;will-change:transform;transform:scaleX(0.84);transform-origin:0 0;letter-spacing:0.133px;">intercourse</div><div style="position:absolute;left:386px;top:199.65px;font-size:7.5px;line-height:7.5px;color:#939393;font-weight:normal;white-space:nowrap;will-change:transform;transform:scaleX(0.84);transform-origin:0 0;letter-spacing:0.196px;">С главным модулем + с</div><div style="position:absolute;left:386px;top:206.65px;font-size:7.5px;line-height:7.5px;color:#939393;font-weight:normal;white-space:nowrap;will-change:transform;transform:scaleX(0.84);transform-origin:0 0;letter-spacing:0.212px;">пятью полями</div><div style="position:absolute;left:503px;top:199.65px;font-size:7.5px;line-height:7.5px;color:#d83030;font-weight:bold;white-space:nowrap;will-change:transform;transform:scaleX(0.84);transform-origin:0 0;letter-spacing:0.438px;">нет</div><svg style="position:absolute;left:543px;top:196px" width="10" height="14" viewBox="0 0 10 14"><rect x="1.5" y="5" width="6.6" height="6.5" rx="1" fill="#d4e0f8" stroke="#98a8de" stroke-width="0.9"/><rect x="3.2" y="7.1" width="3.2" height="2.3" rx="1" fill="none" stroke="#8898d0" stroke-width="0.7"/></svg><svg style="position:absolute;left:573px;top:196px" width="13" height="14" viewBox="0 0 13 14"><rect x="5.2" y="2.7" width="6" height="1.2" fill="#90a4d4"/><rect x="7.2" y="2.1" width="2" height="0.8" fill="#90a4d4"/><path d="M5.5 4 H11 L10.4 11.3 H6.1Z" fill="#9cb0dc"/><path d="M7.6 4.5 V11 M9.2 4.5 V11" stroke="#b8c8ec" stroke-width="0.6"/><path d="M1.6 8.7 H4.3 V7.2 L7.6 10 L4.3 12.8 V11.3 H1.6Z" fill="#e44a24" stroke="#e8683a" stroke-width="0.5" stroke-linejoin="round"/></svg><div style="position:absolute;left:156px;top:238px;width:29px;height:1px;background:#b0d6de"></div><div style="position:absolute;left:187px;top:238px;width:27px;height:1px;background:#b0d6de"></div><div style="position:absolute;left:215px;top:238px;width:109px;height:1px;background:#b0d6de"></div><div style="position:absolute;left:325px;top:238px;width:54px;height:1px;background:#b0d6de"></div><div style="position:absolute;left:380px;top:238px;width:109px;height:1px;background:#b0d6de"></div><div style="position:absolute;left:490px;top:238px;width:43px;height:1px;background:#b0d6de"></div><div style="position:absolute;left:535px;top:238px;width:33px;height:1px;background:#b0d6de"></div><div style="position:absolute;left:569px;top:238px;width:28px;height:1px;background:#b0d6de"></div><svg style="position:absolute;left:161px;top:217px" width="12" height="14" viewBox="0 0 12 14"><rect x="2.4" y="3.3" width="7.4" height="5.5" fill="#bdf0fb" stroke="#a8b4dc" stroke-width="0.9"/><path d="M4 5.6 Q5.5 7.6 8.3 4.8" stroke="#48a8e4" stroke-width="1.2" fill="none"/><rect x="5.6" y="8.8" width="0.9" height="1.2" fill="#707070"/><path d="M1 11 H11" stroke="#d4d0c4" stroke-width="1"/><circle cx="6" cy="11" r="1.6" fill="#f0d060"/></svg><svg style="position:absolute;left:190px;top:217px" width="13" height="15" viewBox="0 0 13 15"><path d="M2.3 2.8 H6.5 L8.5 4.8 V10.6 H2.3Z" fill="#d8e6fa" stroke="#a4b0e0" stroke-width="0.8"/><path d="M4.2 12.6 L10.6 6.6" stroke="#f0a63a" stroke-width="2.3"/><path d="M3.6 13.2 L4.6 12.2" stroke="#c07020" stroke-width="1.2"/></svg><div style="position:absolute;left:220.7px;top:221.09px;font-size:7.5px;line-height:7.5px;color:#38546a;font-weight:normal;white-space:nowrap;will-change:transform;transform:scaleX(0.84);transform-origin:0 0;letter-spacing:0.332px;text-decoration:underline;text-decoration-color:#7a8a96;text-decoration-thickness:1px;text-underline-offset:0px;text-decoration-skip-ink:none;">Закрытая страница</div><div style="position:absolute;left:330.8px;top:221.09px;font-size:7.5px;line-height:7.5px;color:#939393;font-weight:normal;white-space:nowrap;will-change:transform;transform:scaleX(0.84);transform-origin:0 0;letter-spacing:0.156px;">close</div><div style="position:absolute;left:386px;top:221.09px;font-size:7.5px;line-height:7.5px;color:#939393;font-weight:normal;white-space:nowrap;will-change:transform;transform:scaleX(0.84);transform-origin:0 0;letter-spacing:0.196px;">С главным модулем + с</div><div style="position:absolute;left:386px;top:228.09px;font-size:7.5px;line-height:7.5px;color:#939393;font-weight:normal;white-space:nowrap;will-change:transform;transform:scaleX(0.84);transform-origin:0 0;letter-spacing:0.212px;">пятью полями</div><div style="position:absolute;left:502px;top:221.09px;font-size:7.5px;line-height:7.5px;color:#939393;font-weight:normal;white-space:nowrap;will-change:transform;transform:scaleX(0.84);transform-origin:0 0;letter-spacing:0.363px;">есть</div><svg style="position:absolute;left:543px;top:217px" width="10" height="14" viewBox="0 0 10 14"><rect x="1.5" y="4.7" width="6.6" height="6.5" rx="1" fill="#eeeeee" stroke="#d4d4d4" stroke-width="0.9"/><rect x="3.2" y="6.8" width="3.2" height="2.3" rx="1" fill="none" stroke="#c8c8c8" stroke-width="0.7"/></svg><svg style="position:absolute;left:573px;top:217px" width="13" height="14" viewBox="0 0 13 14"><rect x="5.2" y="2.7" width="6" height="1.2" fill="#90a4d4"/><rect x="7.2" y="2.1" width="2" height="0.8" fill="#90a4d4"/><path d="M5.5 4 H11 L10.4 11.3 H6.1Z" fill="#9cb0dc"/><path d="M7.6 4.5 V11 M9.2 4.5 V11" stroke="#b8c8ec" stroke-width="0.6"/><path d="M1.6 8.7 H4.3 V7.2 L7.6 10 L4.3 12.8 V11.3 H1.6Z" fill="#e44a24" stroke="#e8683a" stroke-width="0.5" stroke-linejoin="round"/></svg><div style="position:absolute;left:156px;top:260px;width:29px;height:1px;background:#b0d6de"></div><div style="position:absolute;left:187px;top:260px;width:27px;height:1px;background:#b0d6de"></div><div style="position:absolute;left:215px;top:260px;width:109px;height:1px;background:#b0d6de"></div><div style="position:absolute;left:325px;top:260px;width:54px;height:1px;background:#b0d6de"></div><div style="position:absolute;left:380px;top:260px;width:109px;height:1px;background:#b0d6de"></div><div style="position:absolute;left:490px;top:260px;width:43px;height:1px;background:#b0d6de"></div><div style="position:absolute;left:535px;top:260px;width:33px;height:1px;background:#b0d6de"></div><div style="position:absolute;left:569px;top:260px;width:28px;height:1px;background:#b0d6de"></div><svg style="position:absolute;left:161px;top:239px" width="12" height="14" viewBox="0 0 12 14"><rect x="2.4" y="3.3" width="7.4" height="5.5" fill="#bdf0fb" stroke="#a8b4dc" stroke-width="0.9"/><path d="M4 5.6 Q5.5 7.6 8.3 4.8" stroke="#48a8e4" stroke-width="1.2" fill="none"/><rect x="5.6" y="8.8" width="0.9" height="1.2" fill="#707070"/><path d="M1 11 H11" stroke="#d4d0c4" stroke-width="1"/><circle cx="6" cy="11" r="1.6" fill="#f0d060"/></svg><svg style="position:absolute;left:190px;top:239px" width="13" height="15" viewBox="0 0 13 15"><path d="M2.3 2.8 H6.5 L8.5 4.8 V10.6 H2.3Z" fill="#d8e6fa" stroke="#a4b0e0" stroke-width="0.8"/><path d="M4.2 12.6 L10.6 6.6" stroke="#f0a63a" stroke-width="2.3"/><path d="M3.6 13.2 L4.6 12.2" stroke="#c07020" stroke-width="1.2"/></svg><div style="position:absolute;left:220.7px;top:242.53px;font-size:7.5px;line-height:7.5px;color:#38546a;font-weight:normal;white-space:nowrap;will-change:transform;transform:scaleX(0.84);transform-origin:0 0;letter-spacing:0.382px;text-decoration:underline;text-decoration-color:#7a8a96;text-decoration-thickness:1px;text-underline-offset:0px;text-decoration-skip-ink:none;">Результаты голосования</div><div style="position:absolute;left:330.8px;top:242.53px;font-size:7.5px;line-height:7.5px;color:#939393;font-weight:normal;white-space:nowrap;will-change:transform;transform:scaleX(0.84);transform-origin:0 0;letter-spacing:0.116px;">poll-result</div><div style="position:absolute;left:386px;top:242.53px;font-size:7.5px;line-height:7.5px;color:#939393;font-weight:normal;white-space:nowrap;will-change:transform;transform:scaleX(0.84);transform-origin:0 0;letter-spacing:0.196px;">С главным модулем + с</div><div style="position:absolute;left:386px;top:249.53px;font-size:7.5px;line-height:7.5px;color:#939393;font-weight:normal;white-space:nowrap;will-change:transform;transform:scaleX(0.84);transform-origin:0 0;letter-spacing:0.212px;">пятью полями</div><div style="position:absolute;left:503px;top:242.53px;font-size:7.5px;line-height:7.5px;color:#d83030;font-weight:bold;white-space:nowrap;will-change:transform;transform:scaleX(0.84);transform-origin:0 0;letter-spacing:0.438px;">нет</div><svg style="position:absolute;left:543px;top:239px" width="10" height="14" viewBox="0 0 10 14"><rect x="1.5" y="5" width="6.6" height="6.5" rx="1" fill="#d4e0f8" stroke="#98a8de" stroke-width="0.9"/><rect x="3.2" y="7.1" width="3.2" height="2.3" rx="1" fill="none" stroke="#8898d0" stroke-width="0.7"/></svg><svg style="position:absolute;left:573px;top:239px" width="13" height="14" viewBox="0 0 13 14"><rect x="5.2" y="2.7" width="6" height="1.2" fill="#90a4d4"/><rect x="7.2" y="2.1" width="2" height="0.8" fill="#90a4d4"/><path d="M5.5 4 H11 L10.4 11.3 H6.1Z" fill="#9cb0dc"/><path d="M7.6 4.5 V11 M9.2 4.5 V11" stroke="#b8c8ec" stroke-width="0.6"/><path d="M1.6 8.7 H4.3 V7.2 L7.6 10 L4.3 12.8 V11.3 H1.6Z" fill="#e44a24" stroke="#e8683a" stroke-width="0.5" stroke-linejoin="round"/></svg><div style="position:absolute;left:156px;top:281px;width:29px;height:1px;background:#b0d6de"></div><div style="position:absolute;left:187px;top:281px;width:27px;height:1px;background:#b0d6de"></div><div style="position:absolute;left:215px;top:281px;width:109px;height:1px;background:#b0d6de"></div><div style="position:absolute;left:325px;top:281px;width:54px;height:1px;background:#b0d6de"></div><div style="position:absolute;left:380px;top:281px;width:109px;height:1px;background:#b0d6de"></div><div style="position:absolute;left:490px;top:281px;width:43px;height:1px;background:#b0d6de"></div><div style="position:absolute;left:535px;top:281px;width:33px;height:1px;background:#b0d6de"></div><div style="position:absolute;left:569px;top:281px;width:28px;height:1px;background:#b0d6de"></div><svg style="position:absolute;left:161px;top:260px" width="12" height="14" viewBox="0 0 12 14"><rect x="2.4" y="3.3" width="7.4" height="5.5" fill="#bdf0fb" stroke="#a8b4dc" stroke-width="0.9"/><path d="M4 5.6 Q5.5 7.6 8.3 4.8" stroke="#48a8e4" stroke-width="1.2" fill="none"/><rect x="5.6" y="8.8" width="0.9" height="1.2" fill="#707070"/><path d="M1 11 H11" stroke="#d4d0c4" stroke-width="1"/><circle cx="6" cy="11" r="1.6" fill="#f0d060"/></svg><svg style="position:absolute;left:190px;top:260px" width="13" height="15" viewBox="0 0 13 15"><path d="M2.3 2.8 H6.5 L8.5 4.8 V10.6 H2.3Z" fill="#d8e6fa" stroke="#a4b0e0" stroke-width="0.8"/><path d="M4.2 12.6 L10.6 6.6" stroke="#f0a63a" stroke-width="2.3"/><path d="M3.6 13.2 L4.6 12.2" stroke="#c07020" stroke-width="1.2"/></svg><div style="position:absolute;left:220.7px;top:263.97px;font-size:7.5px;line-height:7.5px;color:#38546a;font-weight:normal;white-space:nowrap;will-change:transform;transform:scaleX(0.84);transform-origin:0 0;letter-spacing:0.412px;text-decoration:underline;text-decoration-color:#7a8a96;text-decoration-thickness:1px;text-underline-offset:0px;text-decoration-skip-ink:none;">Редакции</div><div style="position:absolute;left:330.8px;top:263.97px;font-size:7.5px;line-height:7.5px;color:#939393;font-weight:normal;white-space:nowrap;will-change:transform;transform:scaleX(0.84);transform-origin:0 0;letter-spacing:0.142px;">versions</div><div style="position:absolute;left:386px;top:263.97px;font-size:7.5px;line-height:7.5px;color:#939393;font-weight:normal;white-space:nowrap;will-change:transform;transform:scaleX(0.84);transform-origin:0 0;letter-spacing:0.196px;">С главным модулем + с</div><div style="position:absolute;left:386px;top:270.97px;font-size:7.5px;line-height:7.5px;color:#939393;font-weight:normal;white-space:nowrap;will-change:transform;transform:scaleX(0.84);transform-origin:0 0;letter-spacing:0.212px;">пятью полями</div><div style="position:absolute;left:503px;top:263.97px;font-size:7.5px;line-height:7.5px;color:#d83030;font-weight:bold;white-space:nowrap;will-change:transform;transform:scaleX(0.84);transform-origin:0 0;letter-spacing:0.438px;">нет</div><svg style="position:absolute;left:543px;top:260px" width="10" height="14" viewBox="0 0 10 14"><rect x="1.5" y="5" width="6.6" height="6.5" rx="1" fill="#d4e0f8" stroke="#98a8de" stroke-width="0.9"/><rect x="3.2" y="7.1" width="3.2" height="2.3" rx="1" fill="none" stroke="#8898d0" stroke-width="0.7"/></svg><svg style="position:absolute;left:573px;top:260px" width="13" height="14" viewBox="0 0 13 14"><rect x="5.2" y="2.7" width="6" height="1.2" fill="#90a4d4"/><rect x="7.2" y="2.1" width="2" height="0.8" fill="#90a4d4"/><path d="M5.5 4 H11 L10.4 11.3 H6.1Z" fill="#9cb0dc"/><path d="M7.6 4.5 V11 M9.2 4.5 V11" stroke="#b8c8ec" stroke-width="0.6"/><path d="M1.6 8.7 H4.3 V7.2 L7.6 10 L4.3 12.8 V11.3 H1.6Z" fill="#e44a24" stroke="#e8683a" stroke-width="0.5" stroke-linejoin="round"/></svg><div style="position:absolute;left:156px;top:302px;width:29px;height:1px;background:#b0d6de"></div><div style="position:absolute;left:187px;top:302px;width:27px;height:1px;background:#b0d6de"></div><div style="position:absolute;left:215px;top:302px;width:109px;height:1px;background:#b0d6de"></div><div style="position:absolute;left:325px;top:302px;width:54px;height:1px;background:#b0d6de"></div><div style="position:absolute;left:380px;top:302px;width:109px;height:1px;background:#b0d6de"></div><div style="position:absolute;left:490px;top:302px;width:43px;height:1px;background:#b0d6de"></div><div style="position:absolute;left:535px;top:302px;width:33px;height:1px;background:#b0d6de"></div><div style="position:absolute;left:569px;top:302px;width:28px;height:1px;background:#b0d6de"></div><svg style="position:absolute;left:161px;top:281px" width="12" height="14" viewBox="0 0 12 14"><rect x="2.4" y="3.3" width="7.4" height="5.5" fill="#bdf0fb" stroke="#a8b4dc" stroke-width="0.9"/><path d="M4 5.6 Q5.5 7.6 8.3 4.8" stroke="#48a8e4" stroke-width="1.2" fill="none"/><rect x="5.6" y="8.8" width="0.9" height="1.2" fill="#707070"/><path d="M1 11 H11" stroke="#d4d0c4" stroke-width="1"/><circle cx="6" cy="11" r="1.6" fill="#f0d060"/></svg><svg style="position:absolute;left:190px;top:281px" width="13" height="15" viewBox="0 0 13 15"><path d="M2.3 2.8 H6.5 L8.5 4.8 V10.6 H2.3Z" fill="#d8e6fa" stroke="#a4b0e0" stroke-width="0.8"/><path d="M4.2 12.6 L10.6 6.6" stroke="#f0a63a" stroke-width="2.3"/><path d="M3.6 13.2 L4.6 12.2" stroke="#c07020" stroke-width="1.2"/></svg><div style="position:absolute;left:220.7px;top:285.41px;font-size:7.5px;line-height:7.5px;color:#38546a;font-weight:normal;white-space:nowrap;will-change:transform;transform:scaleX(0.838);transform-origin:0 0;text-decoration:underline;text-decoration-color:#7a8a96;text-decoration-thickness:1px;text-underline-offset:0px;text-decoration-skip-ink:none;">ABO.CMS:E-commerce</div><div style="position:absolute;left:330.8px;top:285.41px;font-size:7.5px;line-height:7.5px;color:#939393;font-weight:normal;white-space:nowrap;will-change:transform;transform:scaleX(0.837);transform-origin:0 0;">e-commerce</div><div style="position:absolute;left:386px;top:285.41px;font-size:7.5px;line-height:7.5px;color:#939393;font-weight:normal;white-space:nowrap;will-change:transform;transform:scaleX(0.84);transform-origin:0 0;letter-spacing:0.196px;">С главным модулем + с</div><div style="position:absolute;left:386px;top:292.41px;font-size:7.5px;line-height:7.5px;color:#939393;font-weight:normal;white-space:nowrap;will-change:transform;transform:scaleX(0.84);transform-origin:0 0;letter-spacing:0.212px;">пятью полями</div><div style="position:absolute;left:502px;top:285.41px;font-size:7.5px;line-height:7.5px;color:#939393;font-weight:normal;white-space:nowrap;will-change:transform;transform:scaleX(0.84);transform-origin:0 0;letter-spacing:0.363px;">есть</div><svg style="position:absolute;left:543px;top:281px" width="10" height="14" viewBox="0 0 10 14"><rect x="1.5" y="4.7" width="6.6" height="6.5" rx="1" fill="#eeeeee" stroke="#d4d4d4" stroke-width="0.9"/><rect x="3.2" y="6.8" width="3.2" height="2.3" rx="1" fill="none" stroke="#c8c8c8" stroke-width="0.7"/></svg><svg style="position:absolute;left:573px;top:281px" width="13" height="14" viewBox="0 0 13 14"><rect x="5.2" y="2.7" width="6" height="1.2" fill="#90a4d4"/><rect x="7.2" y="2.1" width="2" height="0.8" fill="#90a4d4"/><path d="M5.5 4 H11 L10.4 11.3 H6.1Z" fill="#9cb0dc"/><path d="M7.6 4.5 V11 M9.2 4.5 V11" stroke="#b8c8ec" stroke-width="0.6"/><path d="M1.6 8.7 H4.3 V7.2 L7.6 10 L4.3 12.8 V11.3 H1.6Z" fill="#e44a24" stroke="#e8683a" stroke-width="0.5" stroke-linejoin="round"/></svg><div style="position:absolute;left:156px;top:324px;width:29px;height:1px;background:#b0d6de"></div><div style="position:absolute;left:187px;top:324px;width:27px;height:1px;background:#b0d6de"></div><div style="position:absolute;left:215px;top:324px;width:109px;height:1px;background:#b0d6de"></div><div style="position:absolute;left:325px;top:324px;width:54px;height:1px;background:#b0d6de"></div><div style="position:absolute;left:380px;top:324px;width:109px;height:1px;background:#b0d6de"></div><div style="position:absolute;left:490px;top:324px;width:43px;height:1px;background:#b0d6de"></div><div style="position:absolute;left:535px;top:324px;width:33px;height:1px;background:#b0d6de"></div><div style="position:absolute;left:569px;top:324px;width:28px;height:1px;background:#b0d6de"></div><svg style="position:absolute;left:161px;top:303px" width="12" height="14" viewBox="0 0 12 14"><rect x="2.4" y="3.3" width="7.4" height="5.5" fill="#bdf0fb" stroke="#a8b4dc" stroke-width="0.9"/><path d="M4 5.6 Q5.5 7.6 8.3 4.8" stroke="#48a8e4" stroke-width="1.2" fill="none"/><rect x="5.6" y="8.8" width="0.9" height="1.2" fill="#707070"/><path d="M1 11 H11" stroke="#d4d0c4" stroke-width="1"/><circle cx="6" cy="11" r="1.6" fill="#f0d060"/></svg><svg style="position:absolute;left:190px;top:303px" width="13" height="15" viewBox="0 0 13 15"><path d="M2.3 2.8 H6.5 L8.5 4.8 V10.6 H2.3Z" fill="#d8e6fa" stroke="#a4b0e0" stroke-width="0.8"/><path d="M4.2 12.6 L10.6 6.6" stroke="#f0a63a" stroke-width="2.3"/><path d="M3.6 13.2 L4.6 12.2" stroke="#c07020" stroke-width="1.2"/></svg><div style="position:absolute;left:220.7px;top:306.85px;font-size:7.5px;line-height:7.5px;color:#38546a;font-weight:normal;white-space:nowrap;will-change:transform;transform:scaleX(0.84);transform-origin:0 0;letter-spacing:0.155px;text-decoration:underline;text-decoration-color:#7a8a96;text-decoration-thickness:1px;text-underline-offset:0px;text-decoration-skip-ink:none;">ABO.CMS:Corporative</div><div style="position:absolute;left:330.8px;top:306.85px;font-size:7.5px;line-height:7.5px;color:#939393;font-weight:normal;white-space:nowrap;will-change:transform;transform:scaleX(0.84);transform-origin:0 0;letter-spacing:0.230px;">corporative</div><div style="position:absolute;left:386px;top:306.85px;font-size:7.5px;line-height:7.5px;color:#939393;font-weight:normal;white-space:nowrap;will-change:transform;transform:scaleX(0.84);transform-origin:0 0;letter-spacing:0.196px;">С главным модулем + с</div><div style="position:absolute;left:386px;top:313.85px;font-size:7.5px;line-height:7.5px;color:#939393;font-weight:normal;white-space:nowrap;will-change:transform;transform:scaleX(0.84);transform-origin:0 0;letter-spacing:0.212px;">пятью полями</div><div style="position:absolute;left:502px;top:306.85px;font-size:7.5px;line-height:7.5px;color:#939393;font-weight:normal;white-space:nowrap;will-change:transform;transform:scaleX(0.84);transform-origin:0 0;letter-spacing:0.363px;">есть</div><svg style="position:absolute;left:543px;top:303px" width="10" height="14" viewBox="0 0 10 14"><rect x="1.5" y="4.7" width="6.6" height="6.5" rx="1" fill="#eeeeee" stroke="#d4d4d4" stroke-width="0.9"/><rect x="3.2" y="6.8" width="3.2" height="2.3" rx="1" fill="none" stroke="#c8c8c8" stroke-width="0.7"/></svg><svg style="position:absolute;left:573px;top:303px" width="13" height="14" viewBox="0 0 13 14"><rect x="5.2" y="2.7" width="6" height="1.2" fill="#90a4d4"/><rect x="7.2" y="2.1" width="2" height="0.8" fill="#90a4d4"/><path d="M5.5 4 H11 L10.4 11.3 H6.1Z" fill="#9cb0dc"/><path d="M7.6 4.5 V11 M9.2 4.5 V11" stroke="#b8c8ec" stroke-width="0.6"/><path d="M1.6 8.7 H4.3 V7.2 L7.6 10 L4.3 12.8 V11.3 H1.6Z" fill="#e44a24" stroke="#e8683a" stroke-width="0.5" stroke-linejoin="round"/></svg><div style="position:absolute;left:156px;top:345px;width:29px;height:1px;background:#b0d6de"></div><div style="position:absolute;left:187px;top:345px;width:27px;height:1px;background:#b0d6de"></div><div style="position:absolute;left:215px;top:345px;width:109px;height:1px;background:#b0d6de"></div><div style="position:absolute;left:325px;top:345px;width:54px;height:1px;background:#b0d6de"></div><div style="position:absolute;left:380px;top:345px;width:109px;height:1px;background:#b0d6de"></div><div style="position:absolute;left:490px;top:345px;width:43px;height:1px;background:#b0d6de"></div><div style="position:absolute;left:535px;top:345px;width:33px;height:1px;background:#b0d6de"></div><div style="position:absolute;left:569px;top:345px;width:28px;height:1px;background:#b0d6de"></div><svg style="position:absolute;left:161px;top:324px" width="12" height="14" viewBox="0 0 12 14"><rect x="2.4" y="3.3" width="7.4" height="5.5" fill="#bdf0fb" stroke="#a8b4dc" stroke-width="0.9"/><path d="M4 5.6 Q5.5 7.6 8.3 4.8" stroke="#48a8e4" stroke-width="1.2" fill="none"/><rect x="5.6" y="8.8" width="0.9" height="1.2" fill="#707070"/><path d="M1 11 H11" stroke="#d4d0c4" stroke-width="1"/><circle cx="6" cy="11" r="1.6" fill="#f0d060"/></svg><svg style="position:absolute;left:190px;top:324px" width="13" height="15" viewBox="0 0 13 15"><path d="M2.3 2.8 H6.5 L8.5 4.8 V10.6 H2.3Z" fill="#d8e6fa" stroke="#a4b0e0" stroke-width="0.8"/><path d="M4.2 12.6 L10.6 6.6" stroke="#f0a63a" stroke-width="2.3"/><path d="M3.6 13.2 L4.6 12.2" stroke="#c07020" stroke-width="1.2"/></svg><div style="position:absolute;left:220.7px;top:328.29px;font-size:7.5px;line-height:7.5px;color:#38546a;font-weight:normal;white-space:nowrap;will-change:transform;transform:scaleX(0.84);transform-origin:0 0;letter-spacing:0.170px;text-decoration:underline;text-decoration-color:#7a8a96;text-decoration-thickness:1px;text-underline-offset:0px;text-decoration-skip-ink:none;">ABO.CMS:Inform</div><div style="position:absolute;left:330.8px;top:328.29px;font-size:7.5px;line-height:7.5px;color:#939393;font-weight:normal;white-space:nowrap;will-change:transform;transform:scaleX(0.84);transform-origin:0 0;letter-spacing:0.069px;">inform</div><div style="position:absolute;left:386px;top:328.29px;font-size:7.5px;line-height:7.5px;color:#939393;font-weight:normal;white-space:nowrap;will-change:transform;transform:scaleX(0.84);transform-origin:0 0;letter-spacing:0.196px;">С главным модулем + с</div><div style="position:absolute;left:386px;top:335.29px;font-size:7.5px;line-height:7.5px;color:#939393;font-weight:normal;white-space:nowrap;will-change:transform;transform:scaleX(0.84);transform-origin:0 0;letter-spacing:0.212px;">пятью полями</div><div style="position:absolute;left:502px;top:328.29px;font-size:7.5px;line-height:7.5px;color:#939393;font-weight:normal;white-space:nowrap;will-change:transform;transform:scaleX(0.84);transform-origin:0 0;letter-spacing:0.363px;">есть</div><svg style="position:absolute;left:543px;top:324px" width="10" height="14" viewBox="0 0 10 14"><rect x="1.5" y="4.7" width="6.6" height="6.5" rx="1" fill="#eeeeee" stroke="#d4d4d4" stroke-width="0.9"/><rect x="3.2" y="6.8" width="3.2" height="2.3" rx="1" fill="none" stroke="#c8c8c8" stroke-width="0.7"/></svg><svg style="position:absolute;left:573px;top:324px" width="13" height="14" viewBox="0 0 13 14"><rect x="5.2" y="2.7" width="6" height="1.2" fill="#90a4d4"/><rect x="7.2" y="2.1" width="2" height="0.8" fill="#90a4d4"/><path d="M5.5 4 H11 L10.4 11.3 H6.1Z" fill="#9cb0dc"/><path d="M7.6 4.5 V11 M9.2 4.5 V11" stroke="#b8c8ec" stroke-width="0.6"/><path d="M1.6 8.7 H4.3 V7.2 L7.6 10 L4.3 12.8 V11.3 H1.6Z" fill="#e44a24" stroke="#e8683a" stroke-width="0.5" stroke-linejoin="round"/></svg><div style="position:absolute;left:156px;top:367px;width:29px;height:1px;background:#b0d6de"></div><div style="position:absolute;left:187px;top:367px;width:27px;height:1px;background:#b0d6de"></div><div style="position:absolute;left:215px;top:367px;width:109px;height:1px;background:#b0d6de"></div><div style="position:absolute;left:325px;top:367px;width:54px;height:1px;background:#b0d6de"></div><div style="position:absolute;left:380px;top:367px;width:109px;height:1px;background:#b0d6de"></div><div style="position:absolute;left:490px;top:367px;width:43px;height:1px;background:#b0d6de"></div><div style="position:absolute;left:535px;top:367px;width:33px;height:1px;background:#b0d6de"></div><div style="position:absolute;left:569px;top:367px;width:28px;height:1px;background:#b0d6de"></div><svg style="position:absolute;left:161px;top:346px" width="12" height="14" viewBox="0 0 12 14"><rect x="2.4" y="3.3" width="7.4" height="5.5" fill="#bdf0fb" stroke="#a8b4dc" stroke-width="0.9"/><path d="M4 5.6 Q5.5 7.6 8.3 4.8" stroke="#48a8e4" stroke-width="1.2" fill="none"/><rect x="5.6" y="8.8" width="0.9" height="1.2" fill="#707070"/><path d="M1 11 H11" stroke="#d4d0c4" stroke-width="1"/><circle cx="6" cy="11" r="1.6" fill="#f0d060"/></svg><svg style="position:absolute;left:190px;top:346px" width="13" height="15" viewBox="0 0 13 15"><path d="M2.3 2.8 H6.5 L8.5 4.8 V10.6 H2.3Z" fill="#d8e6fa" stroke="#a4b0e0" stroke-width="0.8"/><path d="M4.2 12.6 L10.6 6.6" stroke="#f0a63a" stroke-width="2.3"/><path d="M3.6 13.2 L4.6 12.2" stroke="#c07020" stroke-width="1.2"/></svg><div style="position:absolute;left:220.7px;top:349.73px;font-size:7.5px;line-height:7.5px;color:#38546a;font-weight:normal;white-space:nowrap;will-change:transform;transform:scaleX(0.837);transform-origin:0 0;text-decoration:underline;text-decoration-color:#7a8a96;text-decoration-thickness:1px;text-underline-offset:0px;text-decoration-skip-ink:none;">ABO.CMS:Promo</div><div style="position:absolute;left:330.8px;top:349.73px;font-size:7.5px;line-height:7.5px;color:#939393;font-weight:normal;white-space:nowrap;will-change:transform;transform:scaleX(0.84);transform-origin:0 0;letter-spacing:0.190px;">promo</div><div style="position:absolute;left:386px;top:349.73px;font-size:7.5px;line-height:7.5px;color:#939393;font-weight:normal;white-space:nowrap;will-change:transform;transform:scaleX(0.84);transform-origin:0 0;letter-spacing:0.196px;">С главным модулем + с</div><div style="position:absolute;left:386px;top:356.73px;font-size:7.5px;line-height:7.5px;color:#939393;font-weight:normal;white-space:nowrap;will-change:transform;transform:scaleX(0.84);transform-origin:0 0;letter-spacing:0.212px;">пятью полями</div><div style="position:absolute;left:502px;top:349.73px;font-size:7.5px;line-height:7.5px;color:#939393;font-weight:normal;white-space:nowrap;will-change:transform;transform:scaleX(0.84);transform-origin:0 0;letter-spacing:0.363px;">есть</div><svg style="position:absolute;left:543px;top:346px" width="10" height="14" viewBox="0 0 10 14"><rect x="1.5" y="4.7" width="6.6" height="6.5" rx="1" fill="#eeeeee" stroke="#d4d4d4" stroke-width="0.9"/><rect x="3.2" y="6.8" width="3.2" height="2.3" rx="1" fill="none" stroke="#c8c8c8" stroke-width="0.7"/></svg><svg style="position:absolute;left:573px;top:346px" width="13" height="14" viewBox="0 0 13 14"><rect x="5.2" y="2.7" width="6" height="1.2" fill="#90a4d4"/><rect x="7.2" y="2.1" width="2" height="0.8" fill="#90a4d4"/><path d="M5.5 4 H11 L10.4 11.3 H6.1Z" fill="#9cb0dc"/><path d="M7.6 4.5 V11 M9.2 4.5 V11" stroke="#b8c8ec" stroke-width="0.6"/><path d="M1.6 8.7 H4.3 V7.2 L7.6 10 L4.3 12.8 V11.3 H1.6Z" fill="#e44a24" stroke="#e8683a" stroke-width="0.5" stroke-linejoin="round"/></svg><div style="position:absolute;left:156px;top:388px;width:29px;height:1px;background:#b0d6de"></div><div style="position:absolute;left:187px;top:388px;width:27px;height:1px;background:#b0d6de"></div><div style="position:absolute;left:215px;top:388px;width:109px;height:1px;background:#b0d6de"></div><div style="position:absolute;left:325px;top:388px;width:54px;height:1px;background:#b0d6de"></div><div style="position:absolute;left:380px;top:388px;width:109px;height:1px;background:#b0d6de"></div><div style="position:absolute;left:490px;top:388px;width:43px;height:1px;background:#b0d6de"></div><div style="position:absolute;left:535px;top:388px;width:33px;height:1px;background:#b0d6de"></div><div style="position:absolute;left:569px;top:388px;width:28px;height:1px;background:#b0d6de"></div><svg style="position:absolute;left:161px;top:367px" width="12" height="14" viewBox="0 0 12 14"><rect x="2.4" y="3.3" width="7.4" height="5.5" fill="#bdf0fb" stroke="#a8b4dc" stroke-width="0.9"/><path d="M4 5.6 Q5.5 7.6 8.3 4.8" stroke="#48a8e4" stroke-width="1.2" fill="none"/><rect x="5.6" y="8.8" width="0.9" height="1.2" fill="#707070"/><path d="M1 11 H11" stroke="#d4d0c4" stroke-width="1"/><circle cx="6" cy="11" r="1.6" fill="#f0d060"/></svg><svg style="position:absolute;left:190px;top:367px" width="13" height="15" viewBox="0 0 13 15"><path d="M2.3 2.8 H6.5 L8.5 4.8 V10.6 H2.3Z" fill="#d8e6fa" stroke="#a4b0e0" stroke-width="0.8"/><path d="M4.2 12.6 L10.6 6.6" stroke="#f0a63a" stroke-width="2.3"/><path d="M3.6 13.2 L4.6 12.2" stroke="#c07020" stroke-width="1.2"/></svg><div style="position:absolute;left:220.7px;top:371.17px;font-size:7.5px;line-height:7.5px;color:#38546a;font-weight:normal;white-space:nowrap;will-change:transform;transform:scaleX(0.84);transform-origin:0 0;letter-spacing:0.345px;text-decoration:underline;text-decoration-color:#7a8a96;text-decoration-thickness:1px;text-underline-offset:0px;text-decoration-skip-ink:none;">Стать партнером</div><div style="position:absolute;left:330.8px;top:371.17px;font-size:7.5px;line-height:7.5px;color:#939393;font-weight:normal;white-space:nowrap;will-change:transform;transform:scaleX(0.84);transform-origin:0 0;letter-spacing:0.164px;">begin</div><div style="position:absolute;left:386px;top:371.17px;font-size:7.5px;line-height:7.5px;color:#939393;font-weight:normal;white-space:nowrap;will-change:transform;transform:scaleX(0.84);transform-origin:0 0;letter-spacing:0.196px;">С главным модулем + с</div><div style="position:absolute;left:386px;top:378.17px;font-size:7.5px;line-height:7.5px;color:#939393;font-weight:normal;white-space:nowrap;will-change:transform;transform:scaleX(0.84);transform-origin:0 0;letter-spacing:0.212px;">пятью полями</div><div style="position:absolute;left:502px;top:371.17px;font-size:7.5px;line-height:7.5px;color:#939393;font-weight:normal;white-space:nowrap;will-change:transform;transform:scaleX(0.84);transform-origin:0 0;letter-spacing:0.363px;">есть</div><svg style="position:absolute;left:543px;top:367px" width="10" height="14" viewBox="0 0 10 14"><rect x="1.5" y="4.7" width="6.6" height="6.5" rx="1" fill="#eeeeee" stroke="#d4d4d4" stroke-width="0.9"/><rect x="3.2" y="6.8" width="3.2" height="2.3" rx="1" fill="none" stroke="#c8c8c8" stroke-width="0.7"/></svg><svg style="position:absolute;left:573px;top:367px" width="13" height="14" viewBox="0 0 13 14"><rect x="5.2" y="2.7" width="6" height="1.2" fill="#90a4d4"/><rect x="7.2" y="2.1" width="2" height="0.8" fill="#90a4d4"/><path d="M5.5 4 H11 L10.4 11.3 H6.1Z" fill="#9cb0dc"/><path d="M7.6 4.5 V11 M9.2 4.5 V11" stroke="#b8c8ec" stroke-width="0.6"/><path d="M1.6 8.7 H4.3 V7.2 L7.6 10 L4.3 12.8 V11.3 H1.6Z" fill="#e44a24" stroke="#e8683a" stroke-width="0.5" stroke-linejoin="round"/></svg><div style="position:absolute;left:156px;top:410px;width:29px;height:1px;background:#b0d6de"></div><div style="position:absolute;left:187px;top:410px;width:27px;height:1px;background:#b0d6de"></div><div style="position:absolute;left:215px;top:410px;width:109px;height:1px;background:#b0d6de"></div><div style="position:absolute;left:325px;top:410px;width:54px;height:1px;background:#b0d6de"></div><div style="position:absolute;left:380px;top:410px;width:109px;height:1px;background:#b0d6de"></div><div style="position:absolute;left:490px;top:410px;width:43px;height:1px;background:#b0d6de"></div><div style="position:absolute;left:535px;top:410px;width:33px;height:1px;background:#b0d6de"></div><div style="position:absolute;left:569px;top:410px;width:28px;height:1px;background:#b0d6de"></div><svg style="position:absolute;left:161px;top:389px" width="12" height="14" viewBox="0 0 12 14"><rect x="2.4" y="3.3" width="7.4" height="5.5" fill="#bdf0fb" stroke="#a8b4dc" stroke-width="0.9"/><path d="M4 5.6 Q5.5 7.6 8.3 4.8" stroke="#48a8e4" stroke-width="1.2" fill="none"/><rect x="5.6" y="8.8" width="0.9" height="1.2" fill="#707070"/><path d="M1 11 H11" stroke="#d4d0c4" stroke-width="1"/><circle cx="6" cy="11" r="1.6" fill="#f0d060"/></svg><svg style="position:absolute;left:190px;top:389px" width="13" height="15" viewBox="0 0 13 15"><path d="M2.3 2.8 H6.5 L8.5 4.8 V10.6 H2.3Z" fill="#d8e6fa" stroke="#a4b0e0" stroke-width="0.8"/><path d="M4.2 12.6 L10.6 6.6" stroke="#f0a63a" stroke-width="2.3"/><path d="M3.6 13.2 L4.6 12.2" stroke="#c07020" stroke-width="1.2"/></svg><div style="position:absolute;left:220.7px;top:392.61px;font-size:7.5px;line-height:7.5px;color:#38546a;font-weight:normal;white-space:nowrap;will-change:transform;transform:scaleX(0.84);transform-origin:0 0;letter-spacing:0.173px;text-decoration:underline;text-decoration-color:#7a8a96;text-decoration-thickness:1px;text-underline-offset:0px;text-decoration-skip-ink:none;">Партнерам</div><div style="position:absolute;left:330.8px;top:392.61px;font-size:7.5px;line-height:7.5px;color:#939393;font-weight:normal;white-space:nowrap;will-change:transform;transform:scaleX(0.84);transform-origin:0 0;letter-spacing:0.140px;">partners</div><div style="position:absolute;left:386px;top:392.61px;font-size:7.5px;line-height:7.5px;color:#939393;font-weight:normal;white-space:nowrap;will-change:transform;transform:scaleX(0.84);transform-origin:0 0;letter-spacing:0.196px;">С главным модулем + с</div><div style="position:absolute;left:386px;top:399.61px;font-size:7.5px;line-height:7.5px;color:#939393;font-weight:normal;white-space:nowrap;will-change:transform;transform:scaleX(0.84);transform-origin:0 0;letter-spacing:0.212px;">пятью полями</div><div style="position:absolute;left:502px;top:392.61px;font-size:7.5px;line-height:7.5px;color:#939393;font-weight:normal;white-space:nowrap;will-change:transform;transform:scaleX(0.84);transform-origin:0 0;letter-spacing:0.363px;">есть</div><svg style="position:absolute;left:543px;top:389px" width="10" height="14" viewBox="0 0 10 14"><rect x="1.5" y="4.7" width="6.6" height="6.5" rx="1" fill="#eeeeee" stroke="#d4d4d4" stroke-width="0.9"/><rect x="3.2" y="6.8" width="3.2" height="2.3" rx="1" fill="none" stroke="#c8c8c8" stroke-width="0.7"/></svg><svg style="position:absolute;left:573px;top:389px" width="13" height="14" viewBox="0 0 13 14"><rect x="5.2" y="2.7" width="6" height="1.2" fill="#90a4d4"/><rect x="7.2" y="2.1" width="2" height="0.8" fill="#90a4d4"/><path d="M5.5 4 H11 L10.4 11.3 H6.1Z" fill="#9cb0dc"/><path d="M7.6 4.5 V11 M9.2 4.5 V11" stroke="#b8c8ec" stroke-width="0.6"/><path d="M1.6 8.7 H4.3 V7.2 L7.6 10 L4.3 12.8 V11.3 H1.6Z" fill="#e44a24" stroke="#e8683a" stroke-width="0.5" stroke-linejoin="round"/></svg><div style="position:absolute;left:156px;top:431px;width:29px;height:1px;background:#b0d6de"></div><div style="position:absolute;left:187px;top:431px;width:27px;height:1px;background:#b0d6de"></div><div style="position:absolute;left:215px;top:431px;width:109px;height:1px;background:#b0d6de"></div><div style="position:absolute;left:325px;top:431px;width:54px;height:1px;background:#b0d6de"></div><div style="position:absolute;left:380px;top:431px;width:109px;height:1px;background:#b0d6de"></div><div style="position:absolute;left:490px;top:431px;width:43px;height:1px;background:#b0d6de"></div><div style="position:absolute;left:535px;top:431px;width:33px;height:1px;background:#b0d6de"></div><div style="position:absolute;left:569px;top:431px;width:28px;height:1px;background:#b0d6de"></div><svg style="position:absolute;left:161px;top:410px" width="12" height="14" viewBox="0 0 12 14"><rect x="2.4" y="3.3" width="7.4" height="5.5" fill="#bdf0fb" stroke="#a8b4dc" stroke-width="0.9"/><path d="M4 5.6 Q5.5 7.6 8.3 4.8" stroke="#48a8e4" stroke-width="1.2" fill="none"/><rect x="5.6" y="8.8" width="0.9" height="1.2" fill="#707070"/><path d="M1 11 H11" stroke="#d4d0c4" stroke-width="1"/><circle cx="6" cy="11" r="1.6" fill="#f0d060"/></svg><svg style="position:absolute;left:190px;top:410px" width="13" height="15" viewBox="0 0 13 15"><path d="M2.3 2.8 H6.5 L8.5 4.8 V10.6 H2.3Z" fill="#d8e6fa" stroke="#a4b0e0" stroke-width="0.8"/><path d="M4.2 12.6 L10.6 6.6" stroke="#f0a63a" stroke-width="2.3"/><path d="M3.6 13.2 L4.6 12.2" stroke="#c07020" stroke-width="1.2"/></svg><div style="position:absolute;left:220.7px;top:414.05px;font-size:7.5px;line-height:7.5px;color:#38546a;font-weight:normal;white-space:nowrap;will-change:transform;transform:scaleX(0.84);transform-origin:0 0;letter-spacing:0.088px;text-decoration:underline;text-decoration-color:#7a8a96;text-decoration-thickness:1px;text-underline-offset:0px;text-decoration-skip-ink:none;">Сайты на системе ABO.CMS</div><div style="position:absolute;left:330.8px;top:414.05px;font-size:7.5px;line-height:7.5px;color:#939393;font-weight:normal;white-space:nowrap;will-change:transform;transform:scaleX(0.84);transform-origin:0 0;letter-spacing:0.138px;">sites</div><div style="position:absolute;left:386px;top:414.05px;font-size:7.5px;line-height:7.5px;color:#939393;font-weight:normal;white-space:nowrap;will-change:transform;transform:scaleX(0.84);transform-origin:0 0;letter-spacing:0.196px;">С главным модулем + с</div><div style="position:absolute;left:386px;top:421.05px;font-size:7.5px;line-height:7.5px;color:#939393;font-weight:normal;white-space:nowrap;will-change:transform;transform:scaleX(0.84);transform-origin:0 0;letter-spacing:0.212px;">пятью полями</div><div style="position:absolute;left:503px;top:414.05px;font-size:7.5px;line-height:7.5px;color:#d83030;font-weight:bold;white-space:nowrap;will-change:transform;transform:scaleX(0.84);transform-origin:0 0;letter-spacing:0.438px;">нет</div><svg style="position:absolute;left:543px;top:410px" width="10" height="14" viewBox="0 0 10 14"><rect x="1.5" y="5" width="6.6" height="6.5" rx="1" fill="#d4e0f8" stroke="#98a8de" stroke-width="0.9"/><rect x="3.2" y="7.1" width="3.2" height="2.3" rx="1" fill="none" stroke="#8898d0" stroke-width="0.7"/></svg><svg style="position:absolute;left:573px;top:410px" width="13" height="14" viewBox="0 0 13 14"><rect x="5.2" y="2.7" width="6" height="1.2" fill="#90a4d4"/><rect x="7.2" y="2.1" width="2" height="0.8" fill="#90a4d4"/><path d="M5.5 4 H11 L10.4 11.3 H6.1Z" fill="#9cb0dc"/><path d="M7.6 4.5 V11 M9.2 4.5 V11" stroke="#b8c8ec" stroke-width="0.6"/><path d="M1.6 8.7 H4.3 V7.2 L7.6 10 L4.3 12.8 V11.3 H1.6Z" fill="#e44a24" stroke="#e8683a" stroke-width="0.5" stroke-linejoin="round"/></svg><div style="position:absolute;left:156px;top:452px;width:29px;height:1px;background:#b0d6de"></div><div style="position:absolute;left:187px;top:452px;width:27px;height:1px;background:#b0d6de"></div><div style="position:absolute;left:215px;top:452px;width:109px;height:1px;background:#b0d6de"></div><div style="position:absolute;left:325px;top:452px;width:54px;height:1px;background:#b0d6de"></div><div style="position:absolute;left:380px;top:452px;width:109px;height:1px;background:#b0d6de"></div><div style="position:absolute;left:490px;top:452px;width:43px;height:1px;background:#b0d6de"></div><div style="position:absolute;left:535px;top:452px;width:33px;height:1px;background:#b0d6de"></div><div style="position:absolute;left:569px;top:452px;width:28px;height:1px;background:#b0d6de"></div><svg style="position:absolute;left:161px;top:432px" width="12" height="14" viewBox="0 0 12 14"><rect x="2.4" y="3.3" width="7.4" height="5.5" fill="#bdf0fb" stroke="#a8b4dc" stroke-width="0.9"/><path d="M4 5.6 Q5.5 7.6 8.3 4.8" stroke="#48a8e4" stroke-width="1.2" fill="none"/><rect x="5.6" y="8.8" width="0.9" height="1.2" fill="#707070"/><path d="M1 11 H11" stroke="#d4d0c4" stroke-width="1"/><circle cx="6" cy="11" r="1.6" fill="#f0d060"/></svg><svg style="position:absolute;left:190px;top:432px" width="13" height="15" viewBox="0 0 13 15"><path d="M2.3 2.8 H6.5 L8.5 4.8 V10.6 H2.3Z" fill="#d8e6fa" stroke="#a4b0e0" stroke-width="0.8"/><path d="M4.2 12.6 L10.6 6.6" stroke="#f0a63a" stroke-width="2.3"/><path d="M3.6 13.2 L4.6 12.2" stroke="#c07020" stroke-width="1.2"/></svg><div style="position:absolute;left:220.7px;top:435.49px;font-size:7.5px;line-height:7.5px;color:#38546a;font-weight:normal;white-space:nowrap;will-change:transform;transform:scaleX(0.84);transform-origin:0 0;letter-spacing:0.367px;text-decoration:underline;text-decoration-color:#7a8a96;text-decoration-thickness:1px;text-underline-offset:0px;text-decoration-skip-ink:none;">Документация</div><div style="position:absolute;left:330.8px;top:435.49px;font-size:7.5px;line-height:7.5px;color:#939393;font-weight:normal;white-space:nowrap;will-change:transform;transform:scaleX(0.84);transform-origin:0 0;letter-spacing:0.164px;">documents</div><div style="position:absolute;left:386px;top:435.49px;font-size:7.5px;line-height:7.5px;color:#939393;font-weight:normal;white-space:nowrap;will-change:transform;transform:scaleX(0.84);transform-origin:0 0;letter-spacing:0.196px;">С главным модулем + с</div><div style="position:absolute;left:386px;top:442.49px;font-size:7.5px;line-height:7.5px;color:#939393;font-weight:normal;white-space:nowrap;will-change:transform;transform:scaleX(0.84);transform-origin:0 0;letter-spacing:0.212px;">пятью полями</div><div style="position:absolute;left:503px;top:435.49px;font-size:7.5px;line-height:7.5px;color:#d83030;font-weight:bold;white-space:nowrap;will-change:transform;transform:scaleX(0.84);transform-origin:0 0;letter-spacing:0.438px;">нет</div><svg style="position:absolute;left:543px;top:432px" width="10" height="14" viewBox="0 0 10 14"><rect x="1.5" y="5" width="6.6" height="6.5" rx="1" fill="#d4e0f8" stroke="#98a8de" stroke-width="0.9"/><rect x="3.2" y="7.1" width="3.2" height="2.3" rx="1" fill="none" stroke="#8898d0" stroke-width="0.7"/></svg><svg style="position:absolute;left:573px;top:432px" width="13" height="14" viewBox="0 0 13 14"><rect x="5.2" y="2.7" width="6" height="1.2" fill="#90a4d4"/><rect x="7.2" y="2.1" width="2" height="0.8" fill="#90a4d4"/><path d="M5.5 4 H11 L10.4 11.3 H6.1Z" fill="#9cb0dc"/><path d="M7.6 4.5 V11 M9.2 4.5 V11" stroke="#b8c8ec" stroke-width="0.6"/><path d="M1.6 8.7 H4.3 V7.2 L7.6 10 L4.3 12.8 V11.3 H1.6Z" fill="#e44a24" stroke="#e8683a" stroke-width="0.5" stroke-linejoin="round"/></svg><div style="position:absolute;left:156px;top:474px;width:29px;height:1px;background:#b0d6de"></div><div style="position:absolute;left:187px;top:474px;width:27px;height:1px;background:#b0d6de"></div><div style="position:absolute;left:215px;top:474px;width:109px;height:1px;background:#b0d6de"></div><div style="position:absolute;left:325px;top:474px;width:54px;height:1px;background:#b0d6de"></div><div style="position:absolute;left:380px;top:474px;width:109px;height:1px;background:#b0d6de"></div><div style="position:absolute;left:490px;top:474px;width:43px;height:1px;background:#b0d6de"></div><div style="position:absolute;left:535px;top:474px;width:33px;height:1px;background:#b0d6de"></div><div style="position:absolute;left:569px;top:474px;width:28px;height:1px;background:#b0d6de"></div><svg style="position:absolute;left:161px;top:453px" width="12" height="14" viewBox="0 0 12 14"><rect x="2.4" y="3.3" width="7.4" height="5.5" fill="#bdf0fb" stroke="#a8b4dc" stroke-width="0.9"/><path d="M4 5.6 Q5.5 7.6 8.3 4.8" stroke="#48a8e4" stroke-width="1.2" fill="none"/><rect x="5.6" y="8.8" width="0.9" height="1.2" fill="#707070"/><path d="M1 11 H11" stroke="#d4d0c4" stroke-width="1"/><circle cx="6" cy="11" r="1.6" fill="#f0d060"/></svg><svg style="position:absolute;left:190px;top:453px" width="13" height="15" viewBox="0 0 13 15"><path d="M2.3 2.8 H6.5 L8.5 4.8 V10.6 H2.3Z" fill="#d8e6fa" stroke="#a4b0e0" stroke-width="0.8"/><path d="M4.2 12.6 L10.6 6.6" stroke="#f0a63a" stroke-width="2.3"/><path d="M3.6 13.2 L4.6 12.2" stroke="#c07020" stroke-width="1.2"/></svg><div style="position:absolute;left:220.7px;top:456.93px;font-size:7.5px;line-height:7.5px;color:#38546a;font-weight:normal;white-space:nowrap;will-change:transform;transform:scaleX(0.84);transform-origin:0 0;letter-spacing:0.565px;text-decoration:underline;text-decoration-color:#7a8a96;text-decoration-thickness:1px;text-underline-offset:0px;text-decoration-skip-ink:none;">Техподдержка</div><div style="position:absolute;left:330.8px;top:456.93px;font-size:7.5px;line-height:7.5px;color:#939393;font-weight:normal;white-space:nowrap;will-change:transform;transform:scaleX(0.84);transform-origin:0 0;letter-spacing:0.149px;">support</div><div style="position:absolute;left:386px;top:456.93px;font-size:7.5px;line-height:7.5px;color:#939393;font-weight:normal;white-space:nowrap;will-change:transform;transform:scaleX(0.84);transform-origin:0 0;letter-spacing:0.196px;">С главным модулем + с</div><div style="position:absolute;left:386px;top:463.93px;font-size:7.5px;line-height:7.5px;color:#939393;font-weight:normal;white-space:nowrap;will-change:transform;transform:scaleX(0.84);transform-origin:0 0;letter-spacing:0.212px;">пятью полями</div><div style="position:absolute;left:502px;top:456.93px;font-size:7.5px;line-height:7.5px;color:#939393;font-weight:normal;white-space:nowrap;will-change:transform;transform:scaleX(0.84);transform-origin:0 0;letter-spacing:0.363px;">есть</div><svg style="position:absolute;left:543px;top:453px" width="10" height="14" viewBox="0 0 10 14"><rect x="1.5" y="4.7" width="6.6" height="6.5" rx="1" fill="#eeeeee" stroke="#d4d4d4" stroke-width="0.9"/><rect x="3.2" y="6.8" width="3.2" height="2.3" rx="1" fill="none" stroke="#c8c8c8" stroke-width="0.7"/></svg><svg style="position:absolute;left:573px;top:453px" width="13" height="14" viewBox="0 0 13 14"><rect x="5.2" y="2.7" width="6" height="1.2" fill="#90a4d4"/><rect x="7.2" y="2.1" width="2" height="0.8" fill="#90a4d4"/><path d="M5.5 4 H11 L10.4 11.3 H6.1Z" fill="#9cb0dc"/><path d="M7.6 4.5 V11 M9.2 4.5 V11" stroke="#b8c8ec" stroke-width="0.6"/><path d="M1.6 8.7 H4.3 V7.2 L7.6 10 L4.3 12.8 V11.3 H1.6Z" fill="#e44a24" stroke="#e8683a" stroke-width="0.5" stroke-linejoin="round"/></svg>
</body></html>
